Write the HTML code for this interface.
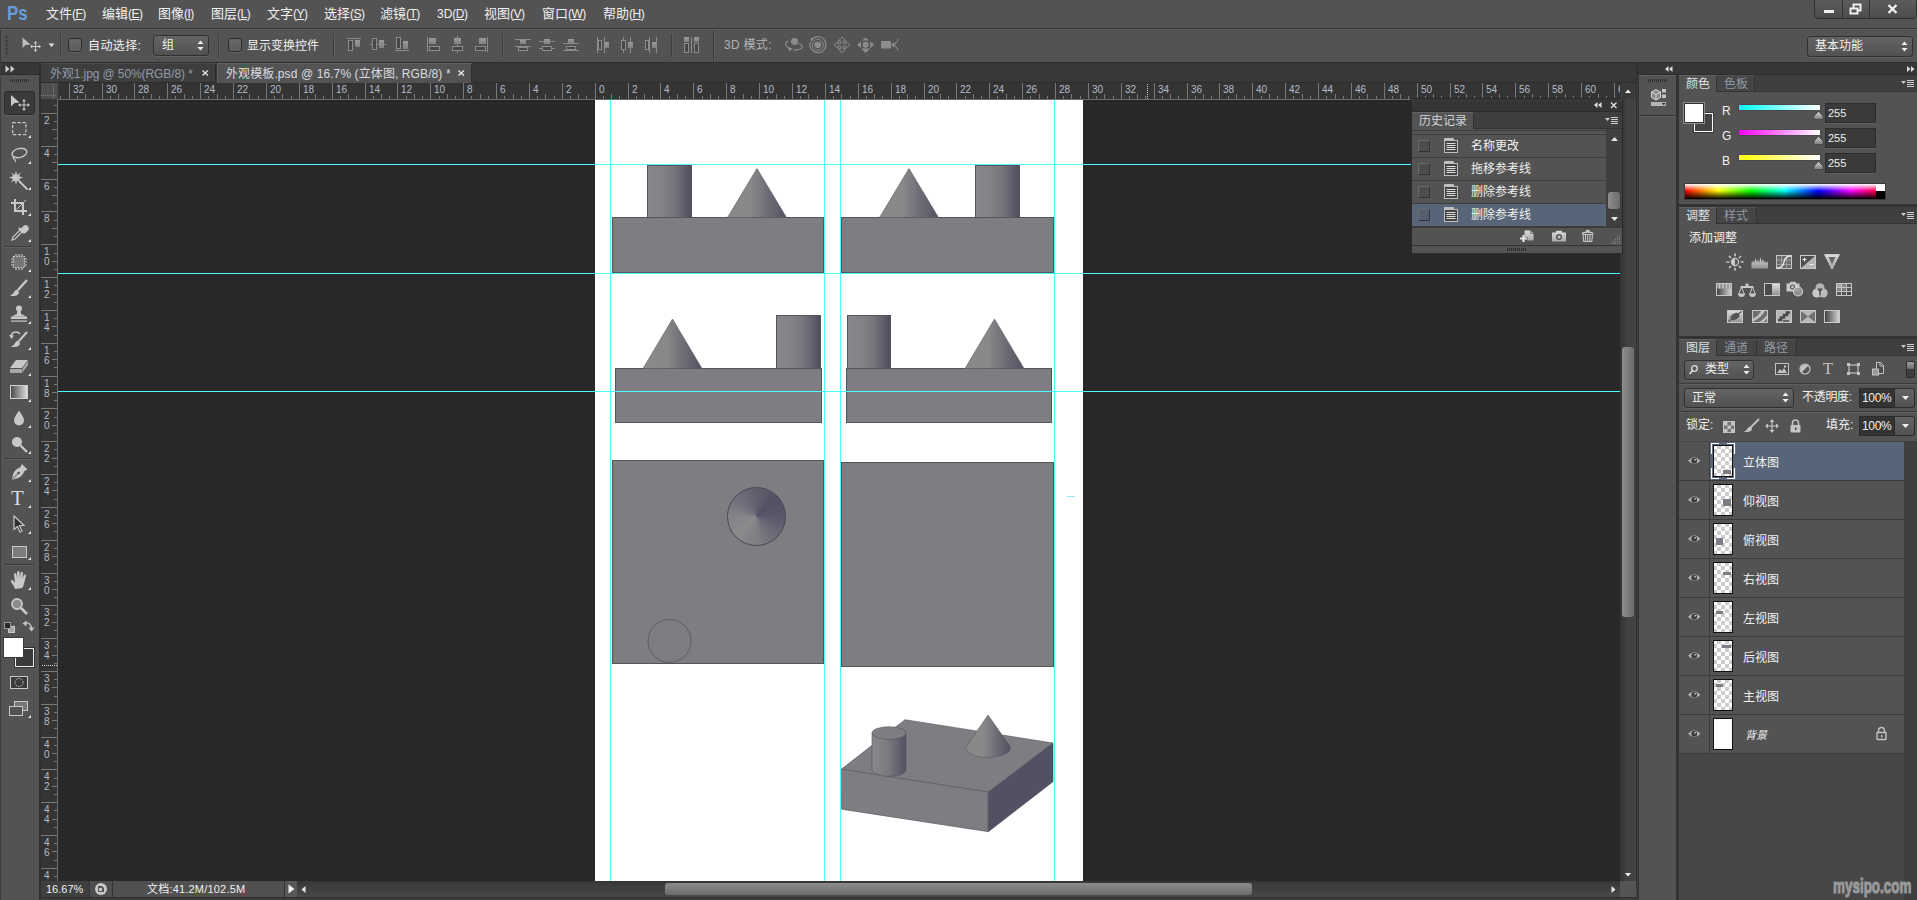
<!DOCTYPE html>
<html lang="zh"><head><meta charset="utf-8"><title>Photoshop</title>
<style>
html,body{margin:0;padding:0;}
body{width:1917px;height:900px;overflow:hidden;background:#535353;position:relative;font-family:"Liberation Sans","Noto Sans CJK SC",sans-serif;font-size:12px;color:#e6e6e6;}
div,svg{position:absolute;box-sizing:border-box;}
.t{white-space:nowrap;}
svg{overflow:visible;}
</style></head><body>
<div style="left:0px;top:0px;width:1917px;height:28px;background:#535353;"></div>
<div style="left:0px;top:28px;width:1917px;height:1px;background:#3a3a3a;"></div>
<div style="left:0px;top:29px;width:1917px;height:1px;background:#5c5c5c;"></div>
<div class="t" style="left:7px;top:1px;height:24px;line-height:24px;font-size:21px;color:#6a9edb;font-weight:bold;transform:scaleX(0.80);transform-origin:left;">Ps</div>
<div class="t" style="left:46px;top:5px;height:17px;line-height:17px;font-size:13px;color:#f0f0f0;"><span style="font-size:13px">文件</span><span style="font-size:12px;letter-spacing:-0.5px">(<u>F</u>)</span></div>
<div class="t" style="left:102px;top:5px;height:17px;line-height:17px;font-size:13px;color:#f0f0f0;"><span style="font-size:13px">编辑</span><span style="font-size:12px;letter-spacing:-0.5px">(<u>E</u>)</span></div>
<div class="t" style="left:158px;top:5px;height:17px;line-height:17px;font-size:13px;color:#f0f0f0;"><span style="font-size:13px">图像</span><span style="font-size:12px;letter-spacing:-0.5px">(<u>I</u>)</span></div>
<div class="t" style="left:211px;top:5px;height:17px;line-height:17px;font-size:13px;color:#f0f0f0;"><span style="font-size:13px">图层</span><span style="font-size:12px;letter-spacing:-0.5px">(<u>L</u>)</span></div>
<div class="t" style="left:267px;top:5px;height:17px;line-height:17px;font-size:13px;color:#f0f0f0;"><span style="font-size:13px">文字</span><span style="font-size:12px;letter-spacing:-0.5px">(<u>Y</u>)</span></div>
<div class="t" style="left:324px;top:5px;height:17px;line-height:17px;font-size:13px;color:#f0f0f0;"><span style="font-size:13px">选择</span><span style="font-size:12px;letter-spacing:-0.5px">(<u>S</u>)</span></div>
<div class="t" style="left:380px;top:5px;height:17px;line-height:17px;font-size:13px;color:#f0f0f0;"><span style="font-size:13px">滤镜</span><span style="font-size:12px;letter-spacing:-0.5px">(<u>T</u>)</span></div>
<div class="t" style="left:437px;top:5px;height:17px;line-height:17px;font-size:13px;color:#f0f0f0;"><span style="font-size:12px">3D</span><span style="font-size:12px;letter-spacing:-0.5px">(<u>D</u>)</span></div>
<div class="t" style="left:484px;top:5px;height:17px;line-height:17px;font-size:13px;color:#f0f0f0;"><span style="font-size:13px">视图</span><span style="font-size:12px;letter-spacing:-0.5px">(<u>V</u>)</span></div>
<div class="t" style="left:542px;top:5px;height:17px;line-height:17px;font-size:13px;color:#f0f0f0;"><span style="font-size:13px">窗口</span><span style="font-size:12px;letter-spacing:-0.5px">(<u>W</u>)</span></div>
<div class="t" style="left:603px;top:5px;height:17px;line-height:17px;font-size:13px;color:#f0f0f0;"><span style="font-size:13px">帮助</span><span style="font-size:12px;letter-spacing:-0.5px">(<u>H</u>)</span></div>
<div style="left:1814px;top:-4px;width:103px;height:23px;background:linear-gradient(#5e5e5e,#4c4c4c);border:1px solid #2e2e2e;border-radius:0 0 4px 4px;"></div>
<div style="left:1842px;top:0px;width:1px;height:18px;background:#333;"></div>
<div style="left:1869px;top:0px;width:1px;height:18px;background:#333;"></div>
<div style="left:1824px;top:10px;width:10px;height:3px;background:#f0f0f0;"></div>
<svg style="left:1849px;top:3px;" width="14" height="12" viewBox="0 0 14 12"><rect x="4.5" y="1.5" width="7" height="6" fill="none" stroke="#f0f0f0" stroke-width="2"/><rect x="1.5" y="5.5" width="7" height="5" fill="#555" stroke="#f0f0f0" stroke-width="2"/></svg>
<svg style="left:1887px;top:4px;" width="12" height="10" viewBox="0 0 12 10"><path d="M1.5 1 L9.5 9 M9.5 1 L1.5 9" stroke="#f0f0f0" stroke-width="2.4"/></svg>
<div style="left:0px;top:30px;width:1917px;height:32px;background:#535353;"></div>
<div style="left:0px;top:30px;width:1px;height:32px;background:#3a3a3a;"></div>
<div style="left:0px;top:62px;width:1917px;height:1px;background:#2e2e2e;"></div>
<div style="left:5px;top:36px;width:3px;height:1px;background:#3a3a3a;"></div>
<div style="left:5px;top:38px;width:3px;height:1px;background:#3a3a3a;"></div>
<div style="left:5px;top:40px;width:3px;height:1px;background:#3a3a3a;"></div>
<div style="left:5px;top:42px;width:3px;height:1px;background:#3a3a3a;"></div>
<div style="left:5px;top:44px;width:3px;height:1px;background:#3a3a3a;"></div>
<div style="left:5px;top:46px;width:3px;height:1px;background:#3a3a3a;"></div>
<div style="left:5px;top:48px;width:3px;height:1px;background:#3a3a3a;"></div>
<div style="left:5px;top:50px;width:3px;height:1px;background:#3a3a3a;"></div>
<div style="left:5px;top:52px;width:3px;height:1px;background:#3a3a3a;"></div>
<div style="left:5px;top:54px;width:3px;height:1px;background:#3a3a3a;"></div>
<svg style="left:22px;top:36px;" width="22" height="17" viewBox="0 0 22 17"><path d="M0.500 1.500 L0.500 12 L3.500 9 L8.500 8.500 Z" fill="#bcbcbc"/><path d="M13.500 6.500 v8 M9.500 10.500 h8" stroke="#c8c8c8" stroke-width="1" fill="none"/><path d="M13.500 5 l-2 2.300 h4z M13.500 16 l-2 -2.300 h4z M8 10.500 l2.300 -2 v4z M19 10.500 l-2.300 -2 v4z" fill="#c8c8c8"/></svg>
<svg style="left:48px;top:43px;" width="8" height="5" viewBox="0 0 8 5"><path d="M0.5 0.5 h6 l-3 3.5z" fill="#e0e0e0"/></svg>
<div style="left:60px;top:34px;width:1px;height:23px;background:#3e3e3e;"></div>
<div style="left:61px;top:34px;width:1px;height:23px;background:#5e5e5e;"></div>
<div style="left:68px;top:38px;width:14px;height:14px;background:linear-gradient(#686868,#5c5c5c);border:1px solid #2c2c2c;border-radius:3px;box-shadow:0 1px 0 #626262;"></div>
<div class="t" style="left:88px;top:38px;height:17px;line-height:17px;font-size:12px;color:#f0f0f0;letter-spacing:0.4px;">自动选择:</div>
<div style="left:153px;top:35px;width:56px;height:21px;background:linear-gradient(#646464,#515151);border:1px solid #303030;border-radius:3px;box-shadow:0 1px 0 #626262;"></div>
<div class="t" style="left:162px;top:36px;height:19px;line-height:19px;font-size:12px;color:#f0f0f0;">组</div>
<svg style="left:197px;top:40px;" width="7" height="11" viewBox="0 0 7 11"><path d="M0.5 4 h6 l-3 -3.5z M0.5 7 h6 l-3 3.5z" fill="#f0f0f0"/></svg>
<div style="left:218px;top:34px;width:1px;height:23px;background:#3e3e3e;"></div>
<div style="left:219px;top:34px;width:1px;height:23px;background:#5e5e5e;"></div>
<div style="left:228px;top:38px;width:14px;height:14px;background:linear-gradient(#686868,#5c5c5c);border:1px solid #2c2c2c;border-radius:3px;box-shadow:0 1px 0 #626262;"></div>
<div class="t" style="left:247px;top:38px;height:17px;line-height:17px;font-size:12px;color:#f0f0f0;">显示变换控件</div>
<div style="left:333px;top:34px;width:1px;height:23px;background:#3e3e3e;"></div>
<div style="left:334px;top:34px;width:1px;height:23px;background:#5e5e5e;"></div>
<svg style="left:0;top:0" width="920" height="62" viewBox="0 0 920 62"><defs><linearGradient id="og" x1="0" x2="0" y1="0" y2="1"><stop offset="0" stop-color="#9a9a9a"/><stop offset="1" stop-color="#808080"/></linearGradient></defs><rect x="347" y="38" width="14" height="1" fill="#8c8c8c"/><rect x="348.5" y="40.5" width="4" height="10" fill="#464646" stroke="#8c8c8c" stroke-width="1"/><rect x="355" y="40" width="5" height="7" fill="url(#og)"/><rect x="370" y="44" width="16" height="1" fill="#8c8c8c"/><rect x="372.5" y="38.5" width="4" height="11" fill="#464646" stroke="#8c8c8c" stroke-width="1"/><rect x="379" y="40" width="5" height="8" fill="url(#og)"/><rect x="395" y="50" width="14" height="1" fill="#8c8c8c"/><rect x="396.5" y="37.5" width="4" height="11" fill="#464646" stroke="#8c8c8c" stroke-width="1"/><rect x="403" y="41" width="5" height="8" fill="url(#og)"/><rect x="427" y="37" width="1" height="15" fill="#8c8c8c"/><rect x="429" y="38" width="7" height="6" fill="url(#og)"/><rect x="429.5" y="46.5" width="10" height="4" fill="#464646" stroke="#8c8c8c" stroke-width="1"/><rect x="457" y="36" width="1" height="17" fill="#8c8c8c"/><rect x="454" y="38" width="7" height="6" fill="url(#og)"/><rect x="452.5" y="46.5" width="10" height="4" fill="#464646" stroke="#8c8c8c" stroke-width="1"/><rect x="487" y="37" width="1" height="15" fill="#8c8c8c"/><rect x="479" y="38" width="7" height="6" fill="url(#og)"/><rect x="475.5" y="46.5" width="10" height="4" fill="#464646" stroke="#8c8c8c" stroke-width="1"/><rect x="515" y="39" width="16" height="1" fill="#8c8c8c"/><rect x="515" y="46" width="16" height="1" fill="#8c8c8c"/><rect x="520" y="40" width="6" height="4" fill="url(#og)"/><rect x="518.5" y="47.5" width="9" height="3" fill="#464646" stroke="#8c8c8c" stroke-width="1"/><rect x="539" y="41" width="16" height="1" fill="#8c8c8c"/><rect x="539" y="48" width="16" height="1" fill="#8c8c8c"/><rect x="544" y="39" width="6" height="5" fill="url(#og)"/><rect x="542.5" y="46.5" width="9" height="4" fill="#464646" stroke="#8c8c8c" stroke-width="1"/><rect x="563" y="43" width="16" height="1" fill="#8c8c8c"/><rect x="563" y="50" width="16" height="1" fill="#8c8c8c"/><rect x="568" y="39" width="6" height="4" fill="url(#og)"/><rect x="566.5" y="46.5" width="9" height="3" fill="#464646" stroke="#8c8c8c" stroke-width="1"/><rect x="597" y="37" width="1" height="16" fill="#8c8c8c"/><rect x="604" y="37" width="1" height="16" fill="#8c8c8c"/><rect x="598.5" y="40.5" width="3" height="9" fill="#464646" stroke="#8c8c8c" stroke-width="1"/><rect x="605" y="42" width="4" height="6" fill="url(#og)"/><rect x="623" y="37" width="1" height="16" fill="#8c8c8c"/><rect x="630" y="37" width="1" height="16" fill="#8c8c8c"/><rect x="621.5" y="40.5" width="4" height="9" fill="#464646" stroke="#8c8c8c" stroke-width="1"/><rect x="628" y="42" width="5" height="6" fill="url(#og)"/><rect x="649" y="37" width="1" height="16" fill="#8c8c8c"/><rect x="656" y="37" width="1" height="16" fill="#8c8c8c"/><rect x="645.5" y="40.5" width="3" height="9" fill="#464646" stroke="#8c8c8c" stroke-width="1"/><rect x="652" y="42" width="4" height="6" fill="url(#og)"/><rect x="684" y="37" width="5" height="5" fill="url(#og)"/><rect x="684.5" y="43.5" width="4" height="9" fill="#464646" stroke="#8c8c8c" stroke-width="1"/><rect x="691" y="37" width="1" height="16" fill="#8c8c8c"/><rect x="694" y="37" width="5" height="5" fill="url(#og)"/><rect x="694.5" y="43.5" width="4" height="9" fill="#464646" stroke="#8c8c8c" stroke-width="1"/><circle cx="794.5" cy="41.5" r="3.6" fill="#8c8c8c"/><path d="M788.5 41 q-4 1.500 -2.500 4.500 q1.500 2.500 5 3.500 M798.500 43.500 q4.500 1.500 3.500 4 q-1.500 2.500 -8 2.500" fill="none" stroke="#8c8c8c" stroke-width="1.300"/><path d="M787.500 47.500 l5.500 0.500 l-3.500 3.500z" fill="#8c8c8c"/><circle cx="817.8" cy="44.8" r="3.400" fill="#8c8c8c"/><circle cx="817.8" cy="44.800" r="5.500" fill="none" stroke="#8c8c8c" stroke-width="1"/><path d="M812.500 38.700 A8 8 0 1 1 810.200 42.500" fill="none" stroke="#8c8c8c" stroke-width="1.200"/><path d="M810.500 38 l4 0 l-3.500 3.800z" fill="#8c8c8c"/><path d="M842 37 l3.500 4 h-2.300 v2.700 h2.700 v-2.300 l4 3.500 l-4 3.500 v-2.300 h-2.700 v2.700 h2.300 l-3.500 4 l-3.500 -4 h2.300 v-2.700 h-2.700 v2.300 l-4 -3.500 l4 -3.500 v2.300 h2.700 v-2.700 h-2.300z" fill="none" stroke="#8c8c8c" stroke-width="1"/><circle cx="865.600" cy="44.800" r="3" fill="#8c8c8c"/><path d="M865.600 37.500 l3.500 3 h-7z M865.600 53 l4.500 -4.500 h-9z M857 44.800 l4 -3.500 v7z M874.200 44.800 l-4 -3.500 v7z" fill="#8c8c8c"/><rect x="881" y="41" width="10" height="7.500" rx="1" fill="#8c8c8c"/><path d="M891 44.800 l3.500 -3 v6z" fill="#8c8c8c"/><path d="M898.500 39 l-3.800 5.800 l3.800 5.800" fill="none" stroke="#8c8c8c" stroke-width="1"/></svg>
<div style="left:502px;top:34px;width:1px;height:23px;background:#3e3e3e;"></div>
<div style="left:503px;top:34px;width:1px;height:23px;background:#5e5e5e;"></div>
<div style="left:671px;top:34px;width:1px;height:23px;background:#3e3e3e;"></div>
<div style="left:672px;top:34px;width:1px;height:23px;background:#5e5e5e;"></div>
<div style="left:713px;top:30px;width:1px;height:32px;background:#3a3a3a;"></div>
<div style="left:714px;top:30px;width:1px;height:32px;background:#5e5e5e;"></div>
<div class="t" style="left:724px;top:37px;height:17px;line-height:17px;font-size:12px;color:#b4b4b4;letter-spacing:0.300px;">3D 模式:</div>
<div style="left:1807px;top:36px;width:106px;height:21px;background:linear-gradient(#646464,#515151);border:1px solid #303030;border-radius:3px;box-shadow:0 1px 0 #626262;"></div>
<div class="t" style="left:1815px;top:37px;height:19px;line-height:19px;font-size:12px;color:#f0f0f0;">基本功能</div>
<svg style="left:1901px;top:41px;" width="7" height="11" viewBox="0 0 7 11"><path d="M0.5 4 h6 l-3 -3.5z M0.5 7 h6 l-3 3.5z" fill="#f0f0f0"/></svg>
<div style="left:0px;top:63px;width:39px;height:11px;background:#373737;"></div>
<div style="left:0px;top:74px;width:39px;height:1px;background:#2c2c2c;"></div>
<div style="left:0px;top:75px;width:39px;height:825px;background:#535353;"></div>
<div style="left:39px;top:63px;width:2px;height:837px;background:#303030;"></div>
<div style="left:0px;top:63px;width:1px;height:837px;background:#3e3e3e;"></div>
<svg style="left:5px;top:65px;" width="12" height="8" viewBox="0 0 12 8"><path d="M0.5 0.5 l4 3.500 l-4 3.500z M5.500 0.500 l4 3.500 l-4 3.500z" fill="#d0d0d0"/></svg>
<div style="left:10px;top:79px;width:1px;height:3px;background:#303030;"></div>
<div style="left:12px;top:79px;width:1px;height:3px;background:#303030;"></div>
<div style="left:14px;top:79px;width:1px;height:3px;background:#303030;"></div>
<div style="left:16px;top:79px;width:1px;height:3px;background:#303030;"></div>
<div style="left:18px;top:79px;width:1px;height:3px;background:#303030;"></div>
<div style="left:20px;top:79px;width:1px;height:3px;background:#303030;"></div>
<div style="left:22px;top:79px;width:1px;height:3px;background:#303030;"></div>
<div style="left:24px;top:79px;width:1px;height:3px;background:#303030;"></div>
<div style="left:26px;top:79px;width:1px;height:3px;background:#303030;"></div>
<div style="left:28px;top:79px;width:1px;height:3px;background:#303030;"></div>
<div style="left:4px;top:91px;width:31px;height:24px;background:#3a3a3a;border:1px solid #2c2c2c;border-radius:3px;box-shadow:0 1px 0 #606060;"></div>
<svg style="left:9px;top:94px;" width="22" height="17" viewBox="0 0 22 17"><path d="M2 1 L2 12.500 L5.500 9 L10.500 8.500 Z" fill="#c8c8c8"/><path d="M15 6.500 v9 M10.500 11 h9" stroke="#c8c8c8" stroke-width="1" fill="none"/><path d="M15 5 l-2 2.300 h4z M15 17 l-2 -2.300 h4z M9 11 l2.300 -2 v4z M21 11 l-2.300 -2 v4z" fill="#c8c8c8"/></svg>
<svg style="left:12px;top:122px;" width="15" height="14" viewBox="0 0 15 14"><rect x="0.600" y="0.600" width="13.300" height="12" fill="none" stroke="#c8c8c8" stroke-width="1.200" stroke-dasharray="3.200 1.800"/></svg>
<svg style="left:28px;top:135px;" width="3" height="3" viewBox="0 0 3 3"><path d="M3 0 v3 h-3z" fill="#e8e8e8"/></svg>
<svg style="left:10px;top:147px;" width="18" height="16" viewBox="0 0 18 16"><ellipse cx="9.500" cy="6" rx="7.500" ry="4.500" fill="none" stroke="#c8c8c8" stroke-width="1.400" transform="rotate(-12 9.500 6)"/><path d="M4 9 q-2 2 0 3 q2 1 1 3" fill="none" stroke="#c8c8c8" stroke-width="1.200"/></svg>
<svg style="left:28px;top:161px;" width="3" height="3" viewBox="0 0 3 3"><path d="M3 0 v3 h-3z" fill="#e8e8e8"/></svg>
<svg style="left:9px;top:171px;" width="20" height="20" viewBox="0 0 20 20"><path d="M10 10 L18.500 18.500" stroke="#c8c8c8" stroke-width="1.800"/><path d="M7 0 L8.300 4 L11.500 1.500 L10 5.300 L14 6.500 L10 8 L12 11.500 L8.300 9.500 L7 13.500 L5.700 9.500 L2 11.500 L4 8 L0 6.500 L4 5.300 L2.500 1.500 L5.700 4 Z" fill="#c8c8c8"/></svg>
<svg style="left:28px;top:187px;" width="3" height="3" viewBox="0 0 3 3"><path d="M3 0 v3 h-3z" fill="#e8e8e8"/></svg>
<svg style="left:11px;top:199px;" width="16" height="16" viewBox="0 0 16 16"><path d="M4 0 v12 h12 M0 4 h12 v12" fill="none" stroke="#c8c8c8" stroke-width="2"/><path d="M5.500 10.500 L15 1" stroke="#c8c8c8" stroke-width="1"/></svg>
<svg style="left:28px;top:213px;" width="3" height="3" viewBox="0 0 3 3"><path d="M3 0 v3 h-3z" fill="#e8e8e8"/></svg>
<svg style="left:10px;top:224px;" width="18" height="18" viewBox="0 0 18 18"><path d="M2 16 L3 13 L10 6 L12 8 L5 15 Z" fill="none" stroke="#c8c8c8" stroke-width="1.200"/><path d="M9 4 L14 9 M11 6 L14 3 a2 2 0 0 1 3 3 L14 9" stroke="#c8c8c8" stroke-width="2.200" fill="#c8c8c8"/></svg>
<svg style="left:28px;top:239px;" width="3" height="3" viewBox="0 0 3 3"><path d="M3 0 v3 h-3z" fill="#e8e8e8"/></svg>
<div style="left:4px;top:246px;width:30px;height:1px;background:#3e3e3e;"></div>
<div style="left:4px;top:247px;width:30px;height:1px;background:#5e5e5e;"></div>
<svg style="left:11px;top:254px;" width="16" height="16" viewBox="0 0 16 16"><rect x="2.500" y="2.500" width="11" height="11" fill="#777" stroke="#c8c8c8" stroke-width="1.200" stroke-dasharray="1.500 1"/><path d="M5 0 v2 M8 0 v2 M11 0 v2 M5 14 v2 M8 14 v2 M11 14 v2 M0 5 h2 M0 8 h2 M0 11 h2 M14 5 h2 M14 8 h2 M14 11 h2" stroke="#c8c8c8" stroke-width="1.200"/></svg>
<svg style="left:28px;top:269px;" width="3" height="3" viewBox="0 0 3 3"><path d="M3 0 v3 h-3z" fill="#e8e8e8"/></svg>
<svg style="left:9px;top:279px;" width="20" height="18" viewBox="0 0 20 18"><path d="M18 1 L9 11" stroke="#c8c8c8" stroke-width="2.400"/><path d="M8.500 10.500 q-2.500 0 -3.500 2.500 q-1 3 -4 3.500 q5 1.500 8 -1 q2 -2 -0.500 -5z" fill="#c8c8c8"/></svg>
<svg style="left:28px;top:295px;" width="3" height="3" viewBox="0 0 3 3"><path d="M3 0 v3 h-3z" fill="#e8e8e8"/></svg>
<svg style="left:10px;top:305px;" width="18" height="18" viewBox="0 0 18 18"><circle cx="9" cy="3.500" r="3" fill="#c8c8c8"/><path d="M7.500 5 h3 l0.500 4 q3 0.500 4.500 2.500 h-13 q1.500 -2 4.500 -2.500z" fill="#c8c8c8"/><rect x="1" y="11.500" width="16" height="2.500" fill="#c8c8c8"/><rect x="1" y="15.500" width="16" height="1.200" fill="#c8c8c8"/></svg>
<svg style="left:28px;top:321px;" width="3" height="3" viewBox="0 0 3 3"><path d="M3 0 v3 h-3z" fill="#e8e8e8"/></svg>
<svg style="left:9px;top:331px;" width="20" height="18" viewBox="0 0 20 18"><path d="M18 1 L10 10" stroke="#c8c8c8" stroke-width="2.200"/><path d="M9.500 9.500 q-2.500 0 -3.500 2.500 q-1 3 -4 3.500 q5 1.500 8 -1 q2 -2 -0.500 -5z" fill="#c8c8c8"/><path d="M2 6 a5 5 0 0 1 9 -3" fill="none" stroke="#c8c8c8" stroke-width="1.500"/><path d="M0 4 l2.500 4 l2.500 -3.500z" fill="#c8c8c8"/></svg>
<svg style="left:28px;top:347px;" width="3" height="3" viewBox="0 0 3 3"><path d="M3 0 v3 h-3z" fill="#e8e8e8"/></svg>
<svg style="left:10px;top:359px;" width="19" height="15" viewBox="0 0 19 15"><path d="M6 1 h12 l-6 8 h-12z" fill="#c8c8c8"/><path d="M0 10 h12 v4 h-12z M12.500 9.500 l5.500 -7.500 v4 l-5.500 7.500z" fill="#a8a8a8"/></svg>
<svg style="left:28px;top:373px;" width="3" height="3" viewBox="0 0 3 3"><path d="M3 0 v3 h-3z" fill="#e8e8e8"/></svg>
<svg style="left:10px;top:385px;" width="18" height="14" viewBox="0 0 18 14"><defs><linearGradient id="tg"><stop offset="0" stop-color="#4a4a4a"/><stop offset="1" stop-color="#e0e0e0"/></linearGradient></defs><rect x="0.500" y="0.500" width="17" height="13" fill="url(#tg)" stroke="#d0d0d0" stroke-width="1"/></svg>
<svg style="left:28px;top:399px;" width="3" height="3" viewBox="0 0 3 3"><path d="M3 0 v3 h-3z" fill="#e8e8e8"/></svg>
<svg style="left:13px;top:410px;" width="12" height="16" viewBox="0 0 12 16"><path d="M6 0.500 q5 7 5 10 a5 5 0 0 1 -10 0 q0 -3 5 -10z" fill="#c8c8c8"/></svg>
<svg style="left:28px;top:425px;" width="3" height="3" viewBox="0 0 3 3"><path d="M3 0 v3 h-3z" fill="#e8e8e8"/></svg>
<svg style="left:10px;top:436px;" width="18" height="17" viewBox="0 0 18 17"><circle cx="7" cy="6" r="5" fill="#c8c8c8"/><path d="M10.500 9.500 L17 16" stroke="#c8c8c8" stroke-width="2.400"/></svg>
<svg style="left:28px;top:451px;" width="3" height="3" viewBox="0 0 3 3"><path d="M3 0 v3 h-3z" fill="#e8e8e8"/></svg>
<div style="left:4px;top:458px;width:30px;height:1px;background:#3e3e3e;"></div>
<div style="left:4px;top:459px;width:30px;height:1px;background:#5e5e5e;"></div>
<svg style="left:10px;top:463px;" width="19" height="18" viewBox="0 0 19 18"><path d="M12 1 l5.500 5.500 l-3 1.500 q-2 5 -6 7 l-7 2 l2 -7 q2 -4 7 -6z" fill="#c8c8c8"/><circle cx="8.500" cy="10" r="1.300" fill="#535353"/><path d="M1.500 17 L8 10.500" stroke="#535353" stroke-width="1"/></svg>
<svg style="left:28px;top:479px;" width="3" height="3" viewBox="0 0 3 3"><path d="M3 0 v3 h-3z" fill="#e8e8e8"/></svg>
<div class="t" style="left:11px;top:486px;height:24px;line-height:24px;font-size:21px;color:#dcdcdc;font-family:'Liberation Serif',serif;">T</div>
<svg style="left:28px;top:505px;" width="3" height="3" viewBox="0 0 3 3"><path d="M3 0 v3 h-3z" fill="#e8e8e8"/></svg>
<svg style="left:13px;top:515px;" width="12" height="18" viewBox="0 0 12 18"><path d="M1 1 L1 14.500 L4.500 11.500 L7 17 L9 16 L6.500 10.500 L11 10.500 Z" fill="#2e2e2e" stroke="#c8c8c8" stroke-width="1.200"/></svg>
<svg style="left:28px;top:531px;" width="3" height="3" viewBox="0 0 3 3"><path d="M3 0 v3 h-3z" fill="#e8e8e8"/></svg>
<svg style="left:12px;top:546px;" width="15" height="12" viewBox="0 0 15 12"><rect x="0.500" y="0.500" width="14" height="11" fill="#7c7c7c" stroke="#c8c8c8" stroke-width="1"/></svg>
<svg style="left:28px;top:557px;" width="3" height="3" viewBox="0 0 3 3"><path d="M3 0 v3 h-3z" fill="#e8e8e8"/></svg>
<div style="left:4px;top:564px;width:30px;height:1px;background:#3e3e3e;"></div>
<div style="left:4px;top:565px;width:30px;height:1px;background:#5e5e5e;"></div>
<svg style="left:10px;top:571px;" width="19" height="19" viewBox="0 0 19 19"><path d="M5 18 q-1 -3 -4 -7 q-1 -2 1 -2 q1 0 3 2.500 l-1 -8 q0 -1.500 1.200 -1.500 q1 0 1.300 1.500 l0.800 4.500 l-0.300 -6.500 q0 -1.500 1.300 -1.500 q1.200 0 1.300 1.500 l0.400 6 l0.600 -5.500 q0.200 -1.400 1.300 -1.300 q1.200 0.200 1.100 1.600 l-0.400 6 l1.200 -3.800 q0.400 -1.200 1.400 -0.900 q1 0.400 0.700 1.700 l-1.500 6 q-0.500 3 -2 5.700z" fill="#c8c8c8"/></svg>
<svg style="left:28px;top:587px;" width="3" height="3" viewBox="0 0 3 3"><path d="M3 0 v3 h-3z" fill="#e8e8e8"/></svg>
<svg style="left:10px;top:597px;" width="18" height="18" viewBox="0 0 18 18"><circle cx="7" cy="7" r="5" fill="#8a8a8a" stroke="#c8c8c8" stroke-width="1.800"/><path d="M11 11 L17 17" stroke="#c8c8c8" stroke-width="2.600"/></svg>
<svg style="left:4px;top:622px;" width="11" height="11" viewBox="0 0 11 11"><rect x="4.500" y="4.500" width="6" height="6" fill="#a8a8a8" stroke="#c8c8c8"/><rect x="0.500" y="0.500" width="6" height="6" fill="#2a2a2a" stroke="#9a9a9a"/></svg>
<svg style="left:22px;top:620px;" width="12" height="12" viewBox="0 0 12 12"><path d="M3 3 q6 -1 6.500 6" fill="none" stroke="#c8c8c8" stroke-width="1.300"/><path d="M0.500 3.500 l4 -3 v6z M9.500 11.500 l-3 -4 h6z" fill="#c8c8c8"/></svg>
<div style="left:15px;top:648px;width:19px;height:19px;background:#3a3a3a;border:1px solid #ececec;box-shadow:0 0 0 1px #303030;"></div>
<div style="left:4px;top:638px;width:19px;height:19px;background:#ffffff;box-shadow:0 0 0 1px #3a3a3a;"></div>
<svg style="left:10px;top:676px;" width="18" height="13" viewBox="0 0 18 13"><rect x="0.500" y="0.500" width="17" height="12" fill="#3a3a3a" stroke="#c8c8c8" stroke-width="1"/><circle cx="9" cy="6.500" r="4" fill="none" stroke="#e8e8e8" stroke-width="1" stroke-dasharray="1 1.100"/></svg>
<svg style="left:9px;top:701px;" width="20" height="16" viewBox="0 0 20 16"><rect x="5.500" y="0.500" width="13" height="9" fill="#777" stroke="#c8c8c8"/><rect x="0.500" y="5.500" width="13" height="9" fill="#535353" stroke="#c8c8c8"/></svg>
<svg style="left:28px;top:715px;" width="3" height="3" viewBox="0 0 3 3"><path d="M3 0 v3 h-3z" fill="#e8e8e8"/></svg>
<div style="left:41px;top:63px;width:1596px;height:20px;background:#383838;"></div>
<div style="left:41px;top:82px;width:1596px;height:1px;background:#2c2c2c;"></div>
<div style="left:41px;top:63px;width:175px;height:19px;background:#3e3e3e;border-right:1px solid #2c2c2c;border-top:1px solid #4a4a4a;"></div>
<div class="t" style="left:50px;top:66px;height:17px;line-height:17px;font-size:12px;color:#8f9aa8;letter-spacing:-0.1px;">外观1.jpg @ 50%(RGB/8) *</div>
<svg style="left:202px;top:70px;" width="7" height="6" viewBox="0 0 7 6"><path d="M0.500 0.500 l5.500 5 M6 0.500 l-5.500 5" stroke="#e0e0e0" stroke-width="1.400"/></svg>
<div style="left:217px;top:63px;width:255px;height:20px;background:#535353;border-right:1px solid #2e2e2e;border-left:1px solid #5e5e5e;border-top:1px solid #626262;"></div>
<div class="t" style="left:226px;top:66px;height:17px;line-height:17px;font-size:12px;color:#d8dce2;letter-spacing:0.1px;">外观模板.psd @ 16.7% (立体图, RGB/8) *</div>
<svg style="left:458px;top:70px;" width="7" height="6" viewBox="0 0 7 6"><path d="M0.500 0.500 l5.500 5 M6 0.500 l-5.500 5" stroke="#e8e8e8" stroke-width="1.400"/></svg>
<div style="left:41px;top:83px;width:1579px;height:17px;background:#343434;"></div>
<div style="left:41px;top:100px;width:17px;height:781px;background:#343434;"></div>
<div style="left:41px;top:83px;width:17px;height:16px;background:#4e4e4e;"></div>
<div style="left:58px;top:99px;width:1562px;height:1px;background:#6c6c6c;"></div>
<div style="left:57px;top:99px;width:1px;height:782px;background:#6c6c6c;"></div>
<div style="left:41px;top:95px;width:16px;height:1px;background:repeating-linear-gradient(90deg,#7c7c7c 0 1px,transparent 1px 2px);"></div>
<div style="left:53px;top:83px;width:1px;height:16px;background:repeating-linear-gradient(0deg,#7c7c7c 0 1px,transparent 1px 2px);"></div>
<div style="left:60px;top:96px;width:1px;height:3px;background:#787878"></div><div style="left:69px;top:83px;width:1px;height:16px;background:#787878"></div><div class="t" style="left:73px;top:84px;height:12px;line-height:12px;font-size:10px;color:#b4bcc8">32</div><div style="left:77px;top:96px;width:1px;height:3px;background:#787878"></div><div style="left:85px;top:94px;width:1px;height:5px;background:#787878"></div><div style="left:93px;top:96px;width:1px;height:3px;background:#787878"></div><div style="left:102px;top:83px;width:1px;height:16px;background:#787878"></div><div class="t" style="left:106px;top:84px;height:12px;line-height:12px;font-size:10px;color:#b4bcc8">30</div><div style="left:110px;top:96px;width:1px;height:3px;background:#787878"></div><div style="left:118px;top:94px;width:1px;height:5px;background:#787878"></div><div style="left:126px;top:96px;width:1px;height:3px;background:#787878"></div><div style="left:134px;top:83px;width:1px;height:16px;background:#787878"></div><div class="t" style="left:138px;top:84px;height:12px;line-height:12px;font-size:10px;color:#b4bcc8">28</div><div style="left:143px;top:96px;width:1px;height:3px;background:#787878"></div><div style="left:151px;top:94px;width:1px;height:5px;background:#787878"></div><div style="left:159px;top:96px;width:1px;height:3px;background:#787878"></div><div style="left:167px;top:83px;width:1px;height:16px;background:#787878"></div><div class="t" style="left:171px;top:84px;height:12px;line-height:12px;font-size:10px;color:#b4bcc8">26</div><div style="left:175px;top:96px;width:1px;height:3px;background:#787878"></div><div style="left:184px;top:94px;width:1px;height:5px;background:#787878"></div><div style="left:192px;top:96px;width:1px;height:3px;background:#787878"></div><div style="left:200px;top:83px;width:1px;height:16px;background:#787878"></div><div class="t" style="left:204px;top:84px;height:12px;line-height:12px;font-size:10px;color:#b4bcc8">24</div><div style="left:208px;top:96px;width:1px;height:3px;background:#787878"></div><div style="left:217px;top:94px;width:1px;height:5px;background:#787878"></div><div style="left:225px;top:96px;width:1px;height:3px;background:#787878"></div><div style="left:233px;top:83px;width:1px;height:16px;background:#787878"></div><div class="t" style="left:237px;top:84px;height:12px;line-height:12px;font-size:10px;color:#b4bcc8">22</div><div style="left:241px;top:96px;width:1px;height:3px;background:#787878"></div><div style="left:249px;top:94px;width:1px;height:5px;background:#787878"></div><div style="left:258px;top:96px;width:1px;height:3px;background:#787878"></div><div style="left:266px;top:83px;width:1px;height:16px;background:#787878"></div><div class="t" style="left:270px;top:84px;height:12px;line-height:12px;font-size:10px;color:#b4bcc8">20</div><div style="left:274px;top:96px;width:1px;height:3px;background:#787878"></div><div style="left:282px;top:94px;width:1px;height:5px;background:#787878"></div><div style="left:291px;top:96px;width:1px;height:3px;background:#787878"></div><div style="left:299px;top:83px;width:1px;height:16px;background:#787878"></div><div class="t" style="left:303px;top:84px;height:12px;line-height:12px;font-size:10px;color:#b4bcc8">18</div><div style="left:307px;top:96px;width:1px;height:3px;background:#787878"></div><div style="left:315px;top:94px;width:1px;height:5px;background:#787878"></div><div style="left:323px;top:96px;width:1px;height:3px;background:#787878"></div><div style="left:332px;top:83px;width:1px;height:16px;background:#787878"></div><div class="t" style="left:336px;top:84px;height:12px;line-height:12px;font-size:10px;color:#b4bcc8">16</div><div style="left:340px;top:96px;width:1px;height:3px;background:#787878"></div><div style="left:348px;top:94px;width:1px;height:5px;background:#787878"></div><div style="left:356px;top:96px;width:1px;height:3px;background:#787878"></div><div style="left:365px;top:83px;width:1px;height:16px;background:#787878"></div><div class="t" style="left:369px;top:84px;height:12px;line-height:12px;font-size:10px;color:#b4bcc8">14</div><div style="left:373px;top:96px;width:1px;height:3px;background:#787878"></div><div style="left:381px;top:94px;width:1px;height:5px;background:#787878"></div><div style="left:389px;top:96px;width:1px;height:3px;background:#787878"></div><div style="left:397px;top:83px;width:1px;height:16px;background:#787878"></div><div class="t" style="left:401px;top:84px;height:12px;line-height:12px;font-size:10px;color:#b4bcc8">12</div><div style="left:406px;top:96px;width:1px;height:3px;background:#787878"></div><div style="left:414px;top:94px;width:1px;height:5px;background:#787878"></div><div style="left:422px;top:96px;width:1px;height:3px;background:#787878"></div><div style="left:430px;top:83px;width:1px;height:16px;background:#787878"></div><div class="t" style="left:434px;top:84px;height:12px;line-height:12px;font-size:10px;color:#b4bcc8">10</div><div style="left:439px;top:96px;width:1px;height:3px;background:#787878"></div><div style="left:447px;top:94px;width:1px;height:5px;background:#787878"></div><div style="left:455px;top:96px;width:1px;height:3px;background:#787878"></div><div style="left:463px;top:83px;width:1px;height:16px;background:#787878"></div><div class="t" style="left:467px;top:84px;height:12px;line-height:12px;font-size:10px;color:#b4bcc8">8</div><div style="left:471px;top:96px;width:1px;height:3px;background:#787878"></div><div style="left:480px;top:94px;width:1px;height:5px;background:#787878"></div><div style="left:488px;top:96px;width:1px;height:3px;background:#787878"></div><div style="left:496px;top:83px;width:1px;height:16px;background:#787878"></div><div class="t" style="left:500px;top:84px;height:12px;line-height:12px;font-size:10px;color:#b4bcc8">6</div><div style="left:504px;top:96px;width:1px;height:3px;background:#787878"></div><div style="left:513px;top:94px;width:1px;height:5px;background:#787878"></div><div style="left:521px;top:96px;width:1px;height:3px;background:#787878"></div><div style="left:529px;top:83px;width:1px;height:16px;background:#787878"></div><div class="t" style="left:533px;top:84px;height:12px;line-height:12px;font-size:10px;color:#b4bcc8">4</div><div style="left:537px;top:96px;width:1px;height:3px;background:#787878"></div><div style="left:545px;top:94px;width:1px;height:5px;background:#787878"></div><div style="left:554px;top:96px;width:1px;height:3px;background:#787878"></div><div style="left:562px;top:83px;width:1px;height:16px;background:#787878"></div><div class="t" style="left:566px;top:84px;height:12px;line-height:12px;font-size:10px;color:#b4bcc8">2</div><div style="left:570px;top:96px;width:1px;height:3px;background:#787878"></div><div style="left:578px;top:94px;width:1px;height:5px;background:#787878"></div><div style="left:586px;top:96px;width:1px;height:3px;background:#787878"></div><div style="left:595px;top:83px;width:1px;height:16px;background:#787878"></div><div class="t" style="left:599px;top:84px;height:12px;line-height:12px;font-size:10px;color:#b4bcc8">0</div><div style="left:603px;top:96px;width:1px;height:3px;background:#787878"></div><div style="left:611px;top:94px;width:1px;height:5px;background:#787878"></div><div style="left:619px;top:96px;width:1px;height:3px;background:#787878"></div><div style="left:628px;top:83px;width:1px;height:16px;background:#787878"></div><div class="t" style="left:632px;top:84px;height:12px;line-height:12px;font-size:10px;color:#b4bcc8">2</div><div style="left:636px;top:96px;width:1px;height:3px;background:#787878"></div><div style="left:644px;top:94px;width:1px;height:5px;background:#787878"></div><div style="left:652px;top:96px;width:1px;height:3px;background:#787878"></div><div style="left:660px;top:83px;width:1px;height:16px;background:#787878"></div><div class="t" style="left:664px;top:84px;height:12px;line-height:12px;font-size:10px;color:#b4bcc8">4</div><div style="left:669px;top:96px;width:1px;height:3px;background:#787878"></div><div style="left:677px;top:94px;width:1px;height:5px;background:#787878"></div><div style="left:685px;top:96px;width:1px;height:3px;background:#787878"></div><div style="left:693px;top:83px;width:1px;height:16px;background:#787878"></div><div class="t" style="left:697px;top:84px;height:12px;line-height:12px;font-size:10px;color:#b4bcc8">6</div><div style="left:702px;top:96px;width:1px;height:3px;background:#787878"></div><div style="left:710px;top:94px;width:1px;height:5px;background:#787878"></div><div style="left:718px;top:96px;width:1px;height:3px;background:#787878"></div><div style="left:726px;top:83px;width:1px;height:16px;background:#787878"></div><div class="t" style="left:730px;top:84px;height:12px;line-height:12px;font-size:10px;color:#b4bcc8">8</div><div style="left:734px;top:96px;width:1px;height:3px;background:#787878"></div><div style="left:743px;top:94px;width:1px;height:5px;background:#787878"></div><div style="left:751px;top:96px;width:1px;height:3px;background:#787878"></div><div style="left:759px;top:83px;width:1px;height:16px;background:#787878"></div><div class="t" style="left:763px;top:84px;height:12px;line-height:12px;font-size:10px;color:#b4bcc8">10</div><div style="left:767px;top:96px;width:1px;height:3px;background:#787878"></div><div style="left:776px;top:94px;width:1px;height:5px;background:#787878"></div><div style="left:784px;top:96px;width:1px;height:3px;background:#787878"></div><div style="left:792px;top:83px;width:1px;height:16px;background:#787878"></div><div class="t" style="left:796px;top:84px;height:12px;line-height:12px;font-size:10px;color:#b4bcc8">12</div><div style="left:800px;top:96px;width:1px;height:3px;background:#787878"></div><div style="left:808px;top:94px;width:1px;height:5px;background:#787878"></div><div style="left:817px;top:96px;width:1px;height:3px;background:#787878"></div><div style="left:825px;top:83px;width:1px;height:16px;background:#787878"></div><div class="t" style="left:829px;top:84px;height:12px;line-height:12px;font-size:10px;color:#b4bcc8">14</div><div style="left:833px;top:96px;width:1px;height:3px;background:#787878"></div><div style="left:841px;top:94px;width:1px;height:5px;background:#787878"></div><div style="left:850px;top:96px;width:1px;height:3px;background:#787878"></div><div style="left:858px;top:83px;width:1px;height:16px;background:#787878"></div><div class="t" style="left:862px;top:84px;height:12px;line-height:12px;font-size:10px;color:#b4bcc8">16</div><div style="left:866px;top:96px;width:1px;height:3px;background:#787878"></div><div style="left:874px;top:94px;width:1px;height:5px;background:#787878"></div><div style="left:882px;top:96px;width:1px;height:3px;background:#787878"></div><div style="left:891px;top:83px;width:1px;height:16px;background:#787878"></div><div class="t" style="left:895px;top:84px;height:12px;line-height:12px;font-size:10px;color:#b4bcc8">18</div><div style="left:899px;top:96px;width:1px;height:3px;background:#787878"></div><div style="left:907px;top:94px;width:1px;height:5px;background:#787878"></div><div style="left:915px;top:96px;width:1px;height:3px;background:#787878"></div><div style="left:924px;top:83px;width:1px;height:16px;background:#787878"></div><div class="t" style="left:928px;top:84px;height:12px;line-height:12px;font-size:10px;color:#b4bcc8">20</div><div style="left:932px;top:96px;width:1px;height:3px;background:#787878"></div><div style="left:940px;top:94px;width:1px;height:5px;background:#787878"></div><div style="left:948px;top:96px;width:1px;height:3px;background:#787878"></div><div style="left:956px;top:83px;width:1px;height:16px;background:#787878"></div><div class="t" style="left:960px;top:84px;height:12px;line-height:12px;font-size:10px;color:#b4bcc8">22</div><div style="left:965px;top:96px;width:1px;height:3px;background:#787878"></div><div style="left:973px;top:94px;width:1px;height:5px;background:#787878"></div><div style="left:981px;top:96px;width:1px;height:3px;background:#787878"></div><div style="left:989px;top:83px;width:1px;height:16px;background:#787878"></div><div class="t" style="left:993px;top:84px;height:12px;line-height:12px;font-size:10px;color:#b4bcc8">24</div><div style="left:997px;top:96px;width:1px;height:3px;background:#787878"></div><div style="left:1006px;top:94px;width:1px;height:5px;background:#787878"></div><div style="left:1014px;top:96px;width:1px;height:3px;background:#787878"></div><div style="left:1022px;top:83px;width:1px;height:16px;background:#787878"></div><div class="t" style="left:1026px;top:84px;height:12px;line-height:12px;font-size:10px;color:#b4bcc8">26</div><div style="left:1030px;top:96px;width:1px;height:3px;background:#787878"></div><div style="left:1039px;top:94px;width:1px;height:5px;background:#787878"></div><div style="left:1047px;top:96px;width:1px;height:3px;background:#787878"></div><div style="left:1055px;top:83px;width:1px;height:16px;background:#787878"></div><div class="t" style="left:1059px;top:84px;height:12px;line-height:12px;font-size:10px;color:#b4bcc8">28</div><div style="left:1063px;top:96px;width:1px;height:3px;background:#787878"></div><div style="left:1071px;top:94px;width:1px;height:5px;background:#787878"></div><div style="left:1080px;top:96px;width:1px;height:3px;background:#787878"></div><div style="left:1088px;top:83px;width:1px;height:16px;background:#787878"></div><div class="t" style="left:1092px;top:84px;height:12px;line-height:12px;font-size:10px;color:#b4bcc8">30</div><div style="left:1096px;top:96px;width:1px;height:3px;background:#787878"></div><div style="left:1104px;top:94px;width:1px;height:5px;background:#787878"></div><div style="left:1113px;top:96px;width:1px;height:3px;background:#787878"></div><div style="left:1121px;top:83px;width:1px;height:16px;background:#787878"></div><div class="t" style="left:1125px;top:84px;height:12px;line-height:12px;font-size:10px;color:#b4bcc8">32</div><div style="left:1129px;top:96px;width:1px;height:3px;background:#787878"></div><div style="left:1137px;top:94px;width:1px;height:5px;background:#787878"></div><div style="left:1145px;top:96px;width:1px;height:3px;background:#787878"></div><div style="left:1154px;top:83px;width:1px;height:16px;background:#787878"></div><div class="t" style="left:1158px;top:84px;height:12px;line-height:12px;font-size:10px;color:#b4bcc8">34</div><div style="left:1162px;top:96px;width:1px;height:3px;background:#787878"></div><div style="left:1170px;top:94px;width:1px;height:5px;background:#787878"></div><div style="left:1178px;top:96px;width:1px;height:3px;background:#787878"></div><div style="left:1187px;top:83px;width:1px;height:16px;background:#787878"></div><div class="t" style="left:1191px;top:84px;height:12px;line-height:12px;font-size:10px;color:#b4bcc8">36</div><div style="left:1195px;top:96px;width:1px;height:3px;background:#787878"></div><div style="left:1203px;top:94px;width:1px;height:5px;background:#787878"></div><div style="left:1211px;top:96px;width:1px;height:3px;background:#787878"></div><div style="left:1219px;top:83px;width:1px;height:16px;background:#787878"></div><div class="t" style="left:1223px;top:84px;height:12px;line-height:12px;font-size:10px;color:#b4bcc8">38</div><div style="left:1228px;top:96px;width:1px;height:3px;background:#787878"></div><div style="left:1236px;top:94px;width:1px;height:5px;background:#787878"></div><div style="left:1244px;top:96px;width:1px;height:3px;background:#787878"></div><div style="left:1252px;top:83px;width:1px;height:16px;background:#787878"></div><div class="t" style="left:1256px;top:84px;height:12px;line-height:12px;font-size:10px;color:#b4bcc8">40</div><div style="left:1261px;top:96px;width:1px;height:3px;background:#787878"></div><div style="left:1269px;top:94px;width:1px;height:5px;background:#787878"></div><div style="left:1277px;top:96px;width:1px;height:3px;background:#787878"></div><div style="left:1285px;top:83px;width:1px;height:16px;background:#787878"></div><div class="t" style="left:1289px;top:84px;height:12px;line-height:12px;font-size:10px;color:#b4bcc8">42</div><div style="left:1293px;top:96px;width:1px;height:3px;background:#787878"></div><div style="left:1302px;top:94px;width:1px;height:5px;background:#787878"></div><div style="left:1310px;top:96px;width:1px;height:3px;background:#787878"></div><div style="left:1318px;top:83px;width:1px;height:16px;background:#787878"></div><div class="t" style="left:1322px;top:84px;height:12px;line-height:12px;font-size:10px;color:#b4bcc8">44</div><div style="left:1326px;top:96px;width:1px;height:3px;background:#787878"></div><div style="left:1335px;top:94px;width:1px;height:5px;background:#787878"></div><div style="left:1343px;top:96px;width:1px;height:3px;background:#787878"></div><div style="left:1351px;top:83px;width:1px;height:16px;background:#787878"></div><div class="t" style="left:1355px;top:84px;height:12px;line-height:12px;font-size:10px;color:#b4bcc8">46</div><div style="left:1359px;top:96px;width:1px;height:3px;background:#787878"></div><div style="left:1367px;top:94px;width:1px;height:5px;background:#787878"></div><div style="left:1376px;top:96px;width:1px;height:3px;background:#787878"></div><div style="left:1384px;top:83px;width:1px;height:16px;background:#787878"></div><div class="t" style="left:1388px;top:84px;height:12px;line-height:12px;font-size:10px;color:#b4bcc8">48</div><div style="left:1392px;top:96px;width:1px;height:3px;background:#787878"></div><div style="left:1400px;top:94px;width:1px;height:5px;background:#787878"></div><div style="left:1408px;top:96px;width:1px;height:3px;background:#787878"></div><div style="left:1417px;top:83px;width:1px;height:16px;background:#787878"></div><div class="t" style="left:1421px;top:84px;height:12px;line-height:12px;font-size:10px;color:#b4bcc8">50</div><div style="left:1425px;top:96px;width:1px;height:3px;background:#787878"></div><div style="left:1433px;top:94px;width:1px;height:5px;background:#787878"></div><div style="left:1441px;top:96px;width:1px;height:3px;background:#787878"></div><div style="left:1450px;top:83px;width:1px;height:16px;background:#787878"></div><div class="t" style="left:1454px;top:84px;height:12px;line-height:12px;font-size:10px;color:#b4bcc8">52</div><div style="left:1458px;top:96px;width:1px;height:3px;background:#787878"></div><div style="left:1466px;top:94px;width:1px;height:5px;background:#787878"></div><div style="left:1474px;top:96px;width:1px;height:3px;background:#787878"></div><div style="left:1482px;top:83px;width:1px;height:16px;background:#787878"></div><div class="t" style="left:1486px;top:84px;height:12px;line-height:12px;font-size:10px;color:#b4bcc8">54</div><div style="left:1491px;top:96px;width:1px;height:3px;background:#787878"></div><div style="left:1499px;top:94px;width:1px;height:5px;background:#787878"></div><div style="left:1507px;top:96px;width:1px;height:3px;background:#787878"></div><div style="left:1515px;top:83px;width:1px;height:16px;background:#787878"></div><div class="t" style="left:1519px;top:84px;height:12px;line-height:12px;font-size:10px;color:#b4bcc8">56</div><div style="left:1524px;top:96px;width:1px;height:3px;background:#787878"></div><div style="left:1532px;top:94px;width:1px;height:5px;background:#787878"></div><div style="left:1540px;top:96px;width:1px;height:3px;background:#787878"></div><div style="left:1548px;top:83px;width:1px;height:16px;background:#787878"></div><div class="t" style="left:1552px;top:84px;height:12px;line-height:12px;font-size:10px;color:#b4bcc8">58</div><div style="left:1556px;top:96px;width:1px;height:3px;background:#787878"></div><div style="left:1565px;top:94px;width:1px;height:5px;background:#787878"></div><div style="left:1573px;top:96px;width:1px;height:3px;background:#787878"></div><div style="left:1581px;top:83px;width:1px;height:16px;background:#787878"></div><div class="t" style="left:1585px;top:84px;height:12px;line-height:12px;font-size:10px;color:#b4bcc8">60</div><div style="left:1589px;top:96px;width:1px;height:3px;background:#787878"></div><div style="left:1598px;top:94px;width:1px;height:5px;background:#787878"></div><div style="left:1606px;top:96px;width:1px;height:3px;background:#787878"></div><div style="left:1614px;top:83px;width:1px;height:16px;background:#787878"></div><div class="t" style="left:1618px;top:84px;height:12px;line-height:12px;font-size:10px;color:#b4bcc8">62</div><div style="left:54px;top:105px;width:3px;height:1px;background:#787878"></div><div style="left:41px;top:113px;width:16px;height:1px;background:#787878"></div><div class="t" style="left:44px;top:115px;height:11px;line-height:11px;font-size:10px;color:#b4bcc8">2</div><div style="left:54px;top:121px;width:3px;height:1px;background:#787878"></div><div style="left:52px;top:129px;width:5px;height:1px;background:#787878"></div><div style="left:54px;top:138px;width:3px;height:1px;background:#787878"></div><div style="left:41px;top:146px;width:16px;height:1px;background:#787878"></div><div class="t" style="left:44px;top:148px;height:11px;line-height:11px;font-size:10px;color:#b4bcc8">4</div><div style="left:54px;top:154px;width:3px;height:1px;background:#787878"></div><div style="left:52px;top:162px;width:5px;height:1px;background:#787878"></div><div style="left:54px;top:170px;width:3px;height:1px;background:#787878"></div><div style="left:41px;top:179px;width:16px;height:1px;background:#787878"></div><div class="t" style="left:44px;top:181px;height:11px;line-height:11px;font-size:10px;color:#b4bcc8">6</div><div style="left:54px;top:187px;width:3px;height:1px;background:#787878"></div><div style="left:52px;top:195px;width:5px;height:1px;background:#787878"></div><div style="left:54px;top:203px;width:3px;height:1px;background:#787878"></div><div style="left:41px;top:211px;width:16px;height:1px;background:#787878"></div><div class="t" style="left:44px;top:213px;height:11px;line-height:11px;font-size:10px;color:#b4bcc8">8</div><div style="left:54px;top:220px;width:3px;height:1px;background:#787878"></div><div style="left:52px;top:228px;width:5px;height:1px;background:#787878"></div><div style="left:54px;top:236px;width:3px;height:1px;background:#787878"></div><div style="left:41px;top:244px;width:16px;height:1px;background:#787878"></div><div class="t" style="left:44px;top:246px;height:11px;line-height:11px;font-size:10px;color:#b4bcc8">1</div><div class="t" style="left:44px;top:256px;height:11px;line-height:11px;font-size:10px;color:#b4bcc8">0</div><div style="left:54px;top:253px;width:3px;height:1px;background:#787878"></div><div style="left:52px;top:261px;width:5px;height:1px;background:#787878"></div><div style="left:54px;top:269px;width:3px;height:1px;background:#787878"></div><div style="left:41px;top:277px;width:16px;height:1px;background:#787878"></div><div class="t" style="left:44px;top:279px;height:11px;line-height:11px;font-size:10px;color:#b4bcc8">1</div><div class="t" style="left:44px;top:289px;height:11px;line-height:11px;font-size:10px;color:#b4bcc8">2</div><div style="left:54px;top:285px;width:3px;height:1px;background:#787878"></div><div style="left:52px;top:294px;width:5px;height:1px;background:#787878"></div><div style="left:54px;top:302px;width:3px;height:1px;background:#787878"></div><div style="left:41px;top:310px;width:16px;height:1px;background:#787878"></div><div class="t" style="left:44px;top:312px;height:11px;line-height:11px;font-size:10px;color:#b4bcc8">1</div><div class="t" style="left:44px;top:322px;height:11px;line-height:11px;font-size:10px;color:#b4bcc8">4</div><div style="left:54px;top:318px;width:3px;height:1px;background:#787878"></div><div style="left:52px;top:326px;width:5px;height:1px;background:#787878"></div><div style="left:54px;top:335px;width:3px;height:1px;background:#787878"></div><div style="left:41px;top:343px;width:16px;height:1px;background:#787878"></div><div class="t" style="left:44px;top:345px;height:11px;line-height:11px;font-size:10px;color:#b4bcc8">1</div><div class="t" style="left:44px;top:355px;height:11px;line-height:11px;font-size:10px;color:#b4bcc8">6</div><div style="left:54px;top:351px;width:3px;height:1px;background:#787878"></div><div style="left:52px;top:359px;width:5px;height:1px;background:#787878"></div><div style="left:54px;top:367px;width:3px;height:1px;background:#787878"></div><div style="left:41px;top:376px;width:16px;height:1px;background:#787878"></div><div class="t" style="left:44px;top:378px;height:11px;line-height:11px;font-size:10px;color:#b4bcc8">1</div><div class="t" style="left:44px;top:388px;height:11px;line-height:11px;font-size:10px;color:#b4bcc8">8</div><div style="left:54px;top:384px;width:3px;height:1px;background:#787878"></div><div style="left:52px;top:392px;width:5px;height:1px;background:#787878"></div><div style="left:54px;top:400px;width:3px;height:1px;background:#787878"></div><div style="left:41px;top:408px;width:16px;height:1px;background:#787878"></div><div class="t" style="left:44px;top:410px;height:11px;line-height:11px;font-size:10px;color:#b4bcc8">2</div><div class="t" style="left:44px;top:420px;height:11px;line-height:11px;font-size:10px;color:#b4bcc8">0</div><div style="left:54px;top:417px;width:3px;height:1px;background:#787878"></div><div style="left:52px;top:425px;width:5px;height:1px;background:#787878"></div><div style="left:54px;top:433px;width:3px;height:1px;background:#787878"></div><div style="left:41px;top:441px;width:16px;height:1px;background:#787878"></div><div class="t" style="left:44px;top:443px;height:11px;line-height:11px;font-size:10px;color:#b4bcc8">2</div><div class="t" style="left:44px;top:453px;height:11px;line-height:11px;font-size:10px;color:#b4bcc8">2</div><div style="left:54px;top:449px;width:3px;height:1px;background:#787878"></div><div style="left:52px;top:458px;width:5px;height:1px;background:#787878"></div><div style="left:54px;top:466px;width:3px;height:1px;background:#787878"></div><div style="left:41px;top:474px;width:16px;height:1px;background:#787878"></div><div class="t" style="left:44px;top:476px;height:11px;line-height:11px;font-size:10px;color:#b4bcc8">2</div><div class="t" style="left:44px;top:486px;height:11px;line-height:11px;font-size:10px;color:#b4bcc8">4</div><div style="left:54px;top:482px;width:3px;height:1px;background:#787878"></div><div style="left:52px;top:490px;width:5px;height:1px;background:#787878"></div><div style="left:54px;top:499px;width:3px;height:1px;background:#787878"></div><div style="left:41px;top:507px;width:16px;height:1px;background:#787878"></div><div class="t" style="left:44px;top:509px;height:11px;line-height:11px;font-size:10px;color:#b4bcc8">2</div><div class="t" style="left:44px;top:519px;height:11px;line-height:11px;font-size:10px;color:#b4bcc8">6</div><div style="left:54px;top:515px;width:3px;height:1px;background:#787878"></div><div style="left:52px;top:523px;width:5px;height:1px;background:#787878"></div><div style="left:54px;top:531px;width:3px;height:1px;background:#787878"></div><div style="left:41px;top:540px;width:16px;height:1px;background:#787878"></div><div class="t" style="left:44px;top:542px;height:11px;line-height:11px;font-size:10px;color:#b4bcc8">2</div><div class="t" style="left:44px;top:552px;height:11px;line-height:11px;font-size:10px;color:#b4bcc8">8</div><div style="left:54px;top:548px;width:3px;height:1px;background:#787878"></div><div style="left:52px;top:556px;width:5px;height:1px;background:#787878"></div><div style="left:54px;top:564px;width:3px;height:1px;background:#787878"></div><div style="left:41px;top:573px;width:16px;height:1px;background:#787878"></div><div class="t" style="left:44px;top:575px;height:11px;line-height:11px;font-size:10px;color:#b4bcc8">3</div><div class="t" style="left:44px;top:585px;height:11px;line-height:11px;font-size:10px;color:#b4bcc8">0</div><div style="left:54px;top:581px;width:3px;height:1px;background:#787878"></div><div style="left:52px;top:589px;width:5px;height:1px;background:#787878"></div><div style="left:54px;top:597px;width:3px;height:1px;background:#787878"></div><div style="left:41px;top:605px;width:16px;height:1px;background:#787878"></div><div class="t" style="left:44px;top:607px;height:11px;line-height:11px;font-size:10px;color:#b4bcc8">3</div><div class="t" style="left:44px;top:617px;height:11px;line-height:11px;font-size:10px;color:#b4bcc8">2</div><div style="left:54px;top:614px;width:3px;height:1px;background:#787878"></div><div style="left:52px;top:622px;width:5px;height:1px;background:#787878"></div><div style="left:54px;top:630px;width:3px;height:1px;background:#787878"></div><div style="left:41px;top:638px;width:16px;height:1px;background:#787878"></div><div class="t" style="left:44px;top:640px;height:11px;line-height:11px;font-size:10px;color:#b4bcc8">3</div><div class="t" style="left:44px;top:650px;height:11px;line-height:11px;font-size:10px;color:#b4bcc8">4</div><div style="left:54px;top:646px;width:3px;height:1px;background:#787878"></div><div style="left:52px;top:655px;width:5px;height:1px;background:#787878"></div><div style="left:54px;top:663px;width:3px;height:1px;background:#787878"></div><div style="left:41px;top:671px;width:16px;height:1px;background:#787878"></div><div class="t" style="left:44px;top:673px;height:11px;line-height:11px;font-size:10px;color:#b4bcc8">3</div><div class="t" style="left:44px;top:683px;height:11px;line-height:11px;font-size:10px;color:#b4bcc8">6</div><div style="left:54px;top:679px;width:3px;height:1px;background:#787878"></div><div style="left:52px;top:687px;width:5px;height:1px;background:#787878"></div><div style="left:54px;top:696px;width:3px;height:1px;background:#787878"></div><div style="left:41px;top:704px;width:16px;height:1px;background:#787878"></div><div class="t" style="left:44px;top:706px;height:11px;line-height:11px;font-size:10px;color:#b4bcc8">3</div><div class="t" style="left:44px;top:716px;height:11px;line-height:11px;font-size:10px;color:#b4bcc8">8</div><div style="left:54px;top:712px;width:3px;height:1px;background:#787878"></div><div style="left:52px;top:720px;width:5px;height:1px;background:#787878"></div><div style="left:54px;top:728px;width:3px;height:1px;background:#787878"></div><div style="left:41px;top:737px;width:16px;height:1px;background:#787878"></div><div class="t" style="left:44px;top:739px;height:11px;line-height:11px;font-size:10px;color:#b4bcc8">4</div><div class="t" style="left:44px;top:749px;height:11px;line-height:11px;font-size:10px;color:#b4bcc8">0</div><div style="left:54px;top:745px;width:3px;height:1px;background:#787878"></div><div style="left:52px;top:753px;width:5px;height:1px;background:#787878"></div><div style="left:54px;top:761px;width:3px;height:1px;background:#787878"></div><div style="left:41px;top:769px;width:16px;height:1px;background:#787878"></div><div class="t" style="left:44px;top:771px;height:11px;line-height:11px;font-size:10px;color:#b4bcc8">4</div><div class="t" style="left:44px;top:781px;height:11px;line-height:11px;font-size:10px;color:#b4bcc8">2</div><div style="left:54px;top:778px;width:3px;height:1px;background:#787878"></div><div style="left:52px;top:786px;width:5px;height:1px;background:#787878"></div><div style="left:54px;top:794px;width:3px;height:1px;background:#787878"></div><div style="left:41px;top:802px;width:16px;height:1px;background:#787878"></div><div class="t" style="left:44px;top:804px;height:11px;line-height:11px;font-size:10px;color:#b4bcc8">4</div><div class="t" style="left:44px;top:814px;height:11px;line-height:11px;font-size:10px;color:#b4bcc8">4</div><div style="left:54px;top:810px;width:3px;height:1px;background:#787878"></div><div style="left:52px;top:819px;width:5px;height:1px;background:#787878"></div><div style="left:54px;top:827px;width:3px;height:1px;background:#787878"></div><div style="left:41px;top:835px;width:16px;height:1px;background:#787878"></div><div class="t" style="left:44px;top:837px;height:11px;line-height:11px;font-size:10px;color:#b4bcc8">4</div><div class="t" style="left:44px;top:847px;height:11px;line-height:11px;font-size:10px;color:#b4bcc8">6</div><div style="left:54px;top:843px;width:3px;height:1px;background:#787878"></div><div style="left:52px;top:851px;width:5px;height:1px;background:#787878"></div><div style="left:54px;top:860px;width:3px;height:1px;background:#787878"></div><div style="left:41px;top:868px;width:16px;height:1px;background:#787878"></div><div class="t" style="left:44px;top:870px;height:11px;line-height:11px;font-size:10px;color:#b4bcc8">4</div><div style="left:54px;top:876px;width:3px;height:1px;background:#787878"></div>
<div style="left:1147px;top:84px;width:1px;height:15px;background:repeating-linear-gradient(0deg,#ccc 0 1px,transparent 1px 2px);"></div>
<div style="left:42px;top:665px;width:15px;height:1px;background:repeating-linear-gradient(90deg,#ddd 0 1px,transparent 1px 2px);"></div>
<div style="left:58px;top:100px;width:1562px;height:781px;background:#282828;"></div>
<div style="left:595px;top:100px;width:488px;height:781px;background:#ffffff;"></div>
<div style="left:647px;top:165px;width:45px;height:53px;background:linear-gradient(90deg,#88888b 0%,#828185 35%,#77767c 60%,#5f5e6b 85%,#4f4e5e 100%);border:1px solid #55545c;border-bottom:none;"></div>
<div style="left:975px;top:165px;width:45px;height:53px;background:linear-gradient(90deg,#88888b 0%,#828185 35%,#77767c 60%,#5f5e6b 85%,#4f4e5e 100%);border:1px solid #55545c;border-bottom:none;"></div>
<div style="left:612px;top:217px;width:212px;height:56px;background:#7e7d82;border:1px solid #55545a;"></div>
<div style="left:841px;top:217px;width:213px;height:56px;background:#7e7d82;border:1px solid #55545a;"></div>
<div style="left:776px;top:315px;width:45px;height:54px;background:linear-gradient(90deg,#88888b 0%,#828185 35%,#77767c 60%,#5f5e6b 85%,#4f4e5e 100%);border:1px solid #55545c;border-bottom:none;"></div>
<div style="left:847px;top:315px;width:44px;height:54px;background:linear-gradient(90deg,#88888b 0%,#828185 35%,#77767c 60%,#5f5e6b 85%,#4f4e5e 100%);border:1px solid #55545c;border-bottom:none;"></div>
<div style="left:615px;top:368px;width:207px;height:55px;background:#7e7d82;border:1px solid #55545a;"></div>
<div style="left:846px;top:368px;width:206px;height:55px;background:#7e7d82;border:1px solid #55545a;"></div>
<div style="left:612px;top:460px;width:212px;height:204px;background:#7e7d82;border:1px solid #55545a;"></div>
<div style="left:841px;top:462px;width:213px;height:205px;background:#7e7d82;border:1px solid #55545a;"></div>
<svg style="left:0;top:0" width="1917" height="900" viewBox="0 0 1917 900"><defs><linearGradient id="cg" x1="0" x2="1" y1="0" y2="0"><stop offset="0" stop-color="#8a8a8b"/><stop offset="0.400" stop-color="#888889"/><stop offset="0.650" stop-color="#717078"/><stop offset="1" stop-color="#525162"/></linearGradient><linearGradient id="cy2" x1="0" x2="1"><stop offset="0" stop-color="#88888b"/><stop offset="0.450" stop-color="#7c7b81"/><stop offset="1" stop-color="#525163"/></linearGradient></defs><path d="M757 168.5 L727.5 217.5 L786.5 217.5 Z" fill="url(#cg)" stroke="#5a5a62" stroke-width="0.600"/><path d="M909 168.5 L879.5 217.5 L938.5 217.5 Z" fill="url(#cg)" stroke="#5a5a62" stroke-width="0.600"/><path d="M672.5 319 L643 368.5 L702 368.5 Z" fill="url(#cg)" stroke="#5a5a62" stroke-width="0.600"/><path d="M994.5 319 L965 368.5 L1024 368.5 Z" fill="url(#cg)" stroke="#5a5a62" stroke-width="0.600"/><circle cx="669.500" cy="641" r="21.500" fill="none" stroke="#55545c" stroke-width="0.800"/><path d="M841.300 769.200 L905 719.700 L1053 743 L988.300 792.200 Z" fill="#7e7d82" stroke="#55545c" stroke-width="0.600"/><path d="M841.300 769.200 L988.300 792.200 L988.300 831.700 L841.300 809.200 Z" fill="#7e7d82" stroke="#55545c" stroke-width="0.600"/><path d="M988.300 792.200 L1053 743 L1053 781.700 L988.300 831.700 Z" fill="#525163" stroke="#4a4958" stroke-width="0.600"/><path d="M872 733 L872 770 A17 6.300 0 0 0 906 770 L906 733 Z" fill="url(#cy2)" stroke="#55545c" stroke-width="0.600"/><ellipse cx="889" cy="733" rx="17" ry="6.300" fill="#7f7e83" stroke="#55545c" stroke-width="0.600"/><ellipse cx="988.300" cy="748" rx="22" ry="9.500" fill="url(#cg)" stroke="#5a5a62" stroke-width="0.600"/><path d="M988 715 L966.800 746 Q988 756 1009.800 746 Z" fill="url(#cg)"/><path d="M966.800 746 L988 715 L1009.800 746" fill="none" stroke="#5a5a62" stroke-width="0.600"/></svg>
<div style="left:727px;top:487px;width:59px;height:59px;background:conic-gradient(from 0deg,#615f6e 0deg,#525164 45deg,#59586a 90deg,#6c6b77 135deg,#7f7e84 180deg,#8b8b8c 225deg,#84848a 270deg,#6f6e7a 315deg,#615f6e 360deg);border-radius:50%;border:1px solid #4a4952;"></div>
<div style="left:610px;top:100px;width:1px;height:781px;background:#4affff;"></div>
<div style="left:824px;top:100px;width:1px;height:781px;background:#4affff;"></div>
<div style="left:840px;top:100px;width:1px;height:781px;background:#4affff;"></div>
<div style="left:1054px;top:100px;width:1px;height:781px;background:#4affff;"></div>
<div style="left:58px;top:164px;width:1562px;height:1px;background:#4affff;"></div>
<div style="left:58px;top:273px;width:1562px;height:1px;background:#4affff;"></div>
<div style="left:58px;top:391px;width:1562px;height:1px;background:#4affff;"></div>
<div style="left:1067px;top:496px;width:8px;height:1px;background:#8eeaf2;"></div>
<div style="left:1620px;top:83px;width:16px;height:798px;background:linear-gradient(90deg,#323232,#424242 45%,#424242);"></div>
<div style="left:1620px;top:83px;width:16px;height:16px;background:#3a3a3a;"></div>
<svg style="left:1625px;top:89px;" width="7" height="4" viewBox="0 0 7 4"><path d="M0 4 h6 l-3 -3.500z" fill="#f0f0f0"/></svg>
<svg style="left:1625px;top:873px;" width="7" height="4" viewBox="0 0 7 4"><path d="M0 0 h6 l-3 3.500z" fill="#f0f0f0"/></svg>
<div style="left:1622px;top:347px;width:12px;height:270px;background:linear-gradient(90deg,#8e8e8e,#6c6c6c);border-radius:3px;"></div>
<div style="left:1636px;top:63px;width:3px;height:837px;background:#323232;"></div>
<div style="left:1637px;top:75px;width:1px;height:825px;background:#3c3c3c;"></div>
<div style="left:41px;top:881px;width:1596px;height:16px;background:linear-gradient(#333333 0,#3a3a3a 2px,#484848 100%);"></div>
<div style="left:41px;top:881px;width:48px;height:16px;background:#3f3f3f;"></div>
<div class="t" style="left:46px;top:881px;height:16px;line-height:16px;font-size:11px;color:#f0f0f0;">16.67%</div>
<div style="left:89px;top:881px;width:24px;height:16px;background:#4e4e4e;border-left:1px solid #333;border-right:1px solid #333;"></div>
<svg style="left:94px;top:882px;" width="14" height="14" viewBox="0 0 14 14"><circle cx="7" cy="7" r="6" fill="#c8c8c8"/><path d="M4 4 h4 l2 2 v4 h-6z" fill="#555"/><path d="M5 6 h3 v3 h-3z" fill="#c8c8c8"/></svg>
<div style="left:113px;top:881px;width:171px;height:16px;background:#505050;"></div>
<div class="t" style="left:147px;top:881px;height:16px;line-height:16px;font-size:11px;color:#f0f0f0;letter-spacing:0.2px;">文档:41.2M/102.5M</div>
<div style="left:284px;top:881px;width:13px;height:16px;background:#585858;border-left:1px solid #333;"></div>
<svg style="left:288px;top:884px;" width="7" height="10" viewBox="0 0 7 10"><path d="M0.500 0.500 v9 l6 -4.500z" fill="#f0f0f0"/></svg>
<svg style="left:301px;top:886px;" width="5" height="7" viewBox="0 0 5 7"><path d="M4.500 0 v7 l-4 -3.500z" fill="#e6e6e6"/></svg>
<svg style="left:1611px;top:886px;" width="5" height="7" viewBox="0 0 5 7"><path d="M0.500 0 v7 l4 -3.500z" fill="#e6e6e6"/></svg>
<div style="left:665px;top:883px;width:587px;height:12px;background:linear-gradient(#8c8c8c,#6c6c6c);border-radius:3px;"></div>
<div style="left:1620px;top:881px;width:16px;height:16px;background:#555555;"></div>
<div style="left:41px;top:897px;width:1596px;height:1px;background:#2e2e2e;"></div>
<div style="left:41px;top:898px;width:1596px;height:2px;background:#3c3c3c;"></div>
<div style="left:1412px;top:99px;width:210px;height:154px;background:#535353;box-shadow:0 0 0 1px #2a2a2a;"></div>
<div style="left:1412px;top:99px;width:210px;height:13px;background:#363636;border-bottom:1px solid #2c2c2c;border-radius:3px 3px 0 0;"></div>
<svg style="left:1594px;top:102px;" width="8" height="6" viewBox="0 0 8 6"><path d="M3.500 0 v6 l-3.500 -3z M7.500 0 v6 l-3.500 -3z" fill="#e0e0e0"/></svg>
<svg style="left:1610px;top:102px;" width="8" height="7" viewBox="0 0 8 7"><path d="M1 0.500 l5.500 5.500 M6.500 0.500 l-5.500 5.500" stroke="#e0e0e0" stroke-width="1.300"/></svg>
<div style="left:1412px;top:112px;width:210px;height:17px;background:#3f3f3f;border-bottom:1px solid #333;"></div>
<div style="left:1412px;top:112px;width:62px;height:17px;background:#535353;border-right:1px solid #333;border-top:1px solid #626262;"></div>
<div class="t" style="left:1419px;top:113px;height:17px;line-height:17px;font-size:12px;color:#d0d4da;">历史记录</div>
<svg style="left:1605px;top:117px;" width="14" height="8" viewBox="0 0 14 8"><path d="M0 1 h5 l-2.500 3z" fill="#d0d0d0"/><rect x="6" y="0" width="7" height="1" fill="#d0d0d0"/><rect x="6" y="2" width="7" height="1" fill="#d0d0d0"/><rect x="6" y="4" width="7" height="1" fill="#d0d0d0"/><rect x="6" y="6" width="7" height="1" fill="#d0d0d0"/></svg>
<div style="left:1412px;top:129px;width:210px;height:5px;background:#535353;"></div>
<div style="left:1412px;top:130px;width:194px;height:1px;background:#3e3e3e;"></div>
<div style="left:1412px;top:134px;width:194px;height:1px;background:#3e3e3e;"></div>
<div style="left:1412px;top:135px;width:194px;height:22px;background:#535353;"></div>
<div style="left:1412px;top:157px;width:194px;height:1px;background:#3e3e3e;"></div>
<div style="left:1418px;top:140px;width:12px;height:12px;background:#4d4d4d;border:1px solid;border-color:#6a6a6a #333 #333 #6a6a6a;"></div>
<svg style="left:1444px;top:137px;" width="14" height="17" viewBox="0 0 14 17"><path d="M0.500 3.500 v-2 h9 v2" fill="#c4c4c4" stroke="#bcbcbc" stroke-width="1"/><rect x="0.500" y="3.500" width="13" height="12" fill="#454545" stroke="#bcbcbc" stroke-width="1"/><rect x="2.500" y="6" width="9" height="1" fill="#e0e0e0"/><rect x="2.500" y="8" width="9" height="1" fill="#e0e0e0"/><rect x="2.500" y="10" width="9" height="1" fill="#e0e0e0"/><rect x="2.500" y="12" width="9" height="1" fill="#e0e0e0"/></svg>
<div class="t" style="left:1471px;top:138px;height:17px;line-height:17px;font-size:12px;color:#f0f0f0;">名称更改</div>
<div style="left:1412px;top:158px;width:194px;height:22px;background:#535353;"></div>
<div style="left:1412px;top:180px;width:194px;height:1px;background:#3e3e3e;"></div>
<div style="left:1418px;top:163px;width:12px;height:12px;background:#4d4d4d;border:1px solid;border-color:#6a6a6a #333 #333 #6a6a6a;"></div>
<svg style="left:1444px;top:160px;" width="14" height="17" viewBox="0 0 14 17"><path d="M0.500 3.500 v-2 h9 v2" fill="#c4c4c4" stroke="#bcbcbc" stroke-width="1"/><rect x="0.500" y="3.500" width="13" height="12" fill="#454545" stroke="#bcbcbc" stroke-width="1"/><rect x="2.500" y="6" width="9" height="1" fill="#e0e0e0"/><rect x="2.500" y="8" width="9" height="1" fill="#e0e0e0"/><rect x="2.500" y="10" width="9" height="1" fill="#e0e0e0"/><rect x="2.500" y="12" width="9" height="1" fill="#e0e0e0"/></svg>
<div class="t" style="left:1471px;top:161px;height:17px;line-height:17px;font-size:12px;color:#f0f0f0;">拖移参考线</div>
<div style="left:1412px;top:181px;width:194px;height:22px;background:#535353;"></div>
<div style="left:1412px;top:203px;width:194px;height:1px;background:#3e3e3e;"></div>
<div style="left:1418px;top:186px;width:12px;height:12px;background:#4d4d4d;border:1px solid;border-color:#6a6a6a #333 #333 #6a6a6a;"></div>
<svg style="left:1444px;top:183px;" width="14" height="17" viewBox="0 0 14 17"><path d="M0.500 3.500 v-2 h9 v2" fill="#c4c4c4" stroke="#bcbcbc" stroke-width="1"/><rect x="0.500" y="3.500" width="13" height="12" fill="#454545" stroke="#bcbcbc" stroke-width="1"/><rect x="2.500" y="6" width="9" height="1" fill="#e0e0e0"/><rect x="2.500" y="8" width="9" height="1" fill="#e0e0e0"/><rect x="2.500" y="10" width="9" height="1" fill="#e0e0e0"/><rect x="2.500" y="12" width="9" height="1" fill="#e0e0e0"/></svg>
<div class="t" style="left:1471px;top:184px;height:17px;line-height:17px;font-size:12px;color:#f0f0f0;">删除参考线</div>
<div style="left:1412px;top:204px;width:194px;height:22px;background:#586578;"></div>
<div style="left:1412px;top:226px;width:194px;height:1px;background:#3e3e3e;"></div>
<div style="left:1418px;top:209px;width:12px;height:12px;background:#535f71;border:1px solid;border-color:#6a6a6a #333 #333 #6a6a6a;"></div>
<svg style="left:1444px;top:206px;" width="14" height="17" viewBox="0 0 14 17"><path d="M0.500 3.500 v-2 h9 v2" fill="#c4c4c4" stroke="#bcbcbc" stroke-width="1"/><rect x="0.500" y="3.500" width="13" height="12" fill="#454545" stroke="#bcbcbc" stroke-width="1"/><rect x="2.500" y="6" width="9" height="1" fill="#e0e0e0"/><rect x="2.500" y="8" width="9" height="1" fill="#e0e0e0"/><rect x="2.500" y="10" width="9" height="1" fill="#e0e0e0"/><rect x="2.500" y="12" width="9" height="1" fill="#e0e0e0"/></svg>
<div class="t" style="left:1471px;top:207px;height:17px;line-height:17px;font-size:12px;color:#f0f0f0;">删除参考线</div>
<div style="left:1606px;top:129px;width:16px;height:98px;background:#3f3f3f;"></div>
<svg style="left:1611px;top:137px;" width="7" height="4" viewBox="0 0 7 4"><path d="M0 4 h7 l-3.500 -4z" fill="#e6e6e6"/></svg>
<svg style="left:1611px;top:217px;" width="7" height="4" viewBox="0 0 7 4"><path d="M0 0 h7 l-3.500 4z" fill="#e6e6e6"/></svg>
<div style="left:1608px;top:192px;width:12px;height:17px;background:linear-gradient(90deg,#8e8e8e,#6c6c6c);border-radius:3px;"></div>
<div style="left:1412px;top:227px;width:210px;height:19px;background:#535353;border-top:1px solid #3a3a3a;"></div>
<svg width="0" height="0" style="left:0;top:0"><defs><linearGradient id="fg1" x1="0" x2="0" y1="0" y2="1"><stop offset="0" stop-color="#dcdcdc"/><stop offset="1" stop-color="#a8a8a8"/></linearGradient></defs></svg>
<svg style="left:1520px;top:230px;" width="14" height="12" viewBox="0 0 14 12"><path d="M4.500 0.500 h6 l3 3 v7 h-6 v-3.500 h-3z" fill="url(#fg1)"/><path d="M10.500 0.500 v3 h3" fill="none" stroke="#666" stroke-width="0.800"/><path d="M3.500 5 v7 M0 8.500 h7" stroke="#e4e4e4" stroke-width="2.200"/></svg>
<svg style="left:1552px;top:230px;" width="14" height="12" viewBox="0 0 14 12"><path d="M0 2.500 h3.500 l1 -1.800 h5 l1 1.800 h3.500 v9 h-14z" fill="url(#fg1)"/><circle cx="7" cy="7" r="3" fill="#4a4a4a"/><circle cx="7" cy="7" r="1.700" fill="#bdbdbd"/></svg>
<svg style="left:1582px;top:230px;" width="12" height="12" viewBox="0 0 12 12"><path d="M0 3.500 q6 -3 11.500 0 M4 1.500 q1.800 -1.800 3.600 0" fill="none" stroke="#cfcfcf" stroke-width="1.400"/><path d="M1 4.500 h9.500 l-0.700 7 h-8.100z" fill="none" stroke="#c4c4c4" stroke-width="1.100"/><path d="M3.500 5 v6 M5.750 5 v6 M8 5 v6" stroke="#c4c4c4" stroke-width="1.100"/></svg>
<svg style="left:1611px;top:235px;" width="9" height="9" viewBox="0 0 9 9"><rect x="8" y="0" width="1" height="1" fill="#8a8a8a"/><rect x="8" y="2" width="1" height="1" fill="#8a8a8a"/><rect x="6" y="2" width="1" height="1" fill="#8a8a8a"/><rect x="8" y="4" width="1" height="1" fill="#8a8a8a"/><rect x="6" y="4" width="1" height="1" fill="#8a8a8a"/><rect x="4" y="4" width="1" height="1" fill="#8a8a8a"/><rect x="8" y="6" width="1" height="1" fill="#8a8a8a"/><rect x="6" y="6" width="1" height="1" fill="#8a8a8a"/><rect x="4" y="6" width="1" height="1" fill="#8a8a8a"/><rect x="2" y="6" width="1" height="1" fill="#8a8a8a"/><rect x="8" y="8" width="1" height="1" fill="#8a8a8a"/><rect x="6" y="8" width="1" height="1" fill="#8a8a8a"/><rect x="4" y="8" width="1" height="1" fill="#8a8a8a"/><rect x="2" y="8" width="1" height="1" fill="#8a8a8a"/><rect x="0" y="8" width="1" height="1" fill="#8a8a8a"/></svg>
<div style="left:1412px;top:245px;width:210px;height:8px;background:#535353;border-top:1px solid #333;"></div>
<div style="left:1507px;top:248px;width:1px;height:3px;background:#2c2c2c;"></div>
<div style="left:1509px;top:248px;width:1px;height:3px;background:#2c2c2c;"></div>
<div style="left:1511px;top:248px;width:1px;height:3px;background:#2c2c2c;"></div>
<div style="left:1513px;top:248px;width:1px;height:3px;background:#2c2c2c;"></div>
<div style="left:1515px;top:248px;width:1px;height:3px;background:#2c2c2c;"></div>
<div style="left:1517px;top:248px;width:1px;height:3px;background:#2c2c2c;"></div>
<div style="left:1519px;top:248px;width:1px;height:3px;background:#2c2c2c;"></div>
<div style="left:1521px;top:248px;width:1px;height:3px;background:#2c2c2c;"></div>
<div style="left:1523px;top:248px;width:1px;height:3px;background:#2c2c2c;"></div>
<div style="left:1525px;top:248px;width:1px;height:3px;background:#2c2c2c;"></div>
<div style="left:1639px;top:63px;width:278px;height:11px;background:#373737;"></div>
<div style="left:1639px;top:74px;width:278px;height:1px;background:#2c2c2c;"></div>
<svg style="left:1665px;top:66px;" width="8" height="6" viewBox="0 0 8 6"><path d="M3.500 0 v6 l-3.500 -3z M7.500 0 v6 l-3.500 -3z" fill="#dcdcdc"/></svg>
<svg style="left:1907px;top:66px;" width="8" height="6" viewBox="0 0 8 6"><path d="M0 0 v6 l3.500 -3z M4 0 v6 l3.500 -3z" fill="#dcdcdc"/></svg>
<div style="left:1639px;top:75px;width:37px;height:825px;background:#535353;"></div>
<div style="left:1639px;top:75px;width:37px;height:1px;background:#626262;"></div>
<div style="left:1639px;top:115px;width:37px;height:1px;background:#333;"></div>
<div style="left:1639px;top:116px;width:37px;height:1px;background:#606060;"></div>
<div style="left:1676px;top:75px;width:3px;height:825px;background:#333333;"></div>
<div style="left:1648px;top:79px;width:1px;height:3px;background:#303030;"></div>
<div style="left:1650px;top:79px;width:1px;height:3px;background:#303030;"></div>
<div style="left:1652px;top:79px;width:1px;height:3px;background:#303030;"></div>
<div style="left:1654px;top:79px;width:1px;height:3px;background:#303030;"></div>
<div style="left:1656px;top:79px;width:1px;height:3px;background:#303030;"></div>
<div style="left:1658px;top:79px;width:1px;height:3px;background:#303030;"></div>
<div style="left:1660px;top:79px;width:1px;height:3px;background:#303030;"></div>
<div style="left:1662px;top:79px;width:1px;height:3px;background:#303030;"></div>
<div style="left:1664px;top:79px;width:1px;height:3px;background:#303030;"></div>
<div style="left:1666px;top:79px;width:1px;height:3px;background:#303030;"></div>
<svg style="left:1650px;top:88px;" width="18" height="19" viewBox="0 0 18 19"><path d="M1.500 4 l4.500 -2.500 l4.500 2.500 v5.500 l-4.500 2.500 l-4.500 -2.500z" fill="#8a8a8a" stroke="#d4d4d4" stroke-width="1"/><path d="M1.500 4 l4.500 2.500 l4.500 -2.500 M6 6.500 v5.500" fill="none" stroke="#d4d4d4" stroke-width="1"/><rect x="12" y="1" width="4" height="3.500" fill="#c4c4c4"/><rect x="12" y="6.500" width="4" height="3.500" fill="#c4c4c4"/><rect x="1" y="14" width="15" height="4" fill="#b4b4b4"/><path d="M12 15 h3.500 l-1.750 2.200z" fill="#222"/></svg>
<div style="left:1679px;top:75px;width:238px;height:17px;background:#3f3f3f;border-bottom:1px solid #333;"></div>
<div style="left:1679px;top:75px;width:38px;height:17px;background:#535353;border-right:1px solid #333;border-top:1px solid #626262;"></div>
<div class="t" style="left:1686px;top:76px;height:17px;line-height:17px;font-size:12px;color:#dfe3e8;">颜色</div>
<div style="left:1717px;top:75px;width:38px;height:16px;background:#454545;border-right:1px solid #333;border-top:1px solid #505050;"></div>
<div class="t" style="left:1724px;top:76px;height:17px;line-height:17px;font-size:12px;color:#8f98a4;">色板</div>
<svg style="left:1901px;top:80px;" width="14" height="8" viewBox="0 0 14 8"><path d="M0 1 h5 l-2.500 3z" fill="#d0d0d0"/><rect x="6" y="0" width="7" height="1" fill="#d0d0d0"/><rect x="6" y="2" width="7" height="1" fill="#d0d0d0"/><rect x="6" y="4" width="7" height="1" fill="#d0d0d0"/><rect x="6" y="6" width="7" height="1" fill="#d0d0d0"/></svg>
<div style="left:1679px;top:92px;width:238px;height:112px;background:#535353;"></div>
<div style="left:1679px;top:204px;width:238px;height:3px;background:#333333;"></div>
<div style="left:1694px;top:113px;width:19px;height:19px;background:#444444;border:1px solid #ffffff;box-shadow:0 0 0 1px #3a3a3a;"></div>
<div style="left:1683px;top:102px;width:22px;height:22px;background:#ffffff;border:1px solid #8c8c8c;box-shadow:inset 0 0 0 1px #333;"></div>
<div class="t" style="left:1722px;top:103px;height:17px;line-height:17px;font-size:12px;color:#f0f0f0;">R</div>
<div style="left:1739px;top:105px;width:81px;height:5px;background:linear-gradient(90deg,#00ffff,#ffffff);box-shadow:0 0 0 1px #4a4a4a;"></div>
<svg style="left:1813px;top:111px;" width="11" height="9" viewBox="0 0 11 9"><defs><linearGradient id="thR" x1="0" x2="0" y1="0" y2="1"><stop offset="0" stop-color="#d8d8d8"/><stop offset="1" stop-color="#7a7a7a"/></linearGradient></defs><path d="M5.500 0.500 L10 5 V8.500 H1 V5 Z" fill="url(#thR)" stroke="#444" stroke-width="0.800"/></svg>
<div style="left:1825px;top:103px;width:51px;height:20px;background:#3a3a3a;border:1px solid #2e2e2e;box-shadow:0 1px 0 #606060;"></div>
<div class="t" style="left:1828px;top:105px;height:17px;line-height:17px;font-size:11px;color:#f0f0f0;">255</div>
<div class="t" style="left:1722px;top:128px;height:17px;line-height:17px;font-size:12px;color:#f0f0f0;">G</div>
<div style="left:1739px;top:130px;width:81px;height:5px;background:linear-gradient(90deg,#ff00ff,#ffffff);box-shadow:0 0 0 1px #4a4a4a;"></div>
<svg style="left:1813px;top:136px;" width="11" height="9" viewBox="0 0 11 9"><defs><linearGradient id="thG" x1="0" x2="0" y1="0" y2="1"><stop offset="0" stop-color="#d8d8d8"/><stop offset="1" stop-color="#7a7a7a"/></linearGradient></defs><path d="M5.500 0.500 L10 5 V8.500 H1 V5 Z" fill="url(#thG)" stroke="#444" stroke-width="0.800"/></svg>
<div style="left:1825px;top:128px;width:51px;height:20px;background:#3a3a3a;border:1px solid #2e2e2e;box-shadow:0 1px 0 #606060;"></div>
<div class="t" style="left:1828px;top:130px;height:17px;line-height:17px;font-size:11px;color:#f0f0f0;">255</div>
<div class="t" style="left:1722px;top:153px;height:17px;line-height:17px;font-size:12px;color:#f0f0f0;">B</div>
<div style="left:1739px;top:155px;width:81px;height:5px;background:linear-gradient(90deg,#ffff00,#ffffff);box-shadow:0 0 0 1px #4a4a4a;"></div>
<svg style="left:1813px;top:161px;" width="11" height="9" viewBox="0 0 11 9"><defs><linearGradient id="thB" x1="0" x2="0" y1="0" y2="1"><stop offset="0" stop-color="#d8d8d8"/><stop offset="1" stop-color="#7a7a7a"/></linearGradient></defs><path d="M5.500 0.500 L10 5 V8.500 H1 V5 Z" fill="url(#thB)" stroke="#444" stroke-width="0.800"/></svg>
<div style="left:1825px;top:153px;width:51px;height:20px;background:#3a3a3a;border:1px solid #2e2e2e;box-shadow:0 1px 0 #606060;"></div>
<div class="t" style="left:1828px;top:155px;height:17px;line-height:17px;font-size:11px;color:#f0f0f0;">255</div>
<div style="left:1685px;top:184px;width:200px;height:15px;background:linear-gradient(180deg,rgba(255,255,255,1) 0%,rgba(255,255,255,0) 45%,rgba(0,0,0,0) 45%,rgba(0,0,0,0.55) 75%,rgba(0,0,0,1) 100%),linear-gradient(90deg,#ff0000 0%,#ffff00 16.600%,#00ff00 33.300%,#00ffff 50%,#0000ff 66.600%,#ff00ff 83.300%,#ff0000 100%);box-shadow:0 0 0 1px #3a3a3a;"></div>
<div style="left:1876px;top:184px;width:9px;height:7px;background:#ffffff;"></div>
<div style="left:1876px;top:191px;width:9px;height:8px;background:#000000;"></div>
<div style="left:1679px;top:207px;width:238px;height:17px;background:#3f3f3f;border-bottom:1px solid #333;"></div>
<div style="left:1679px;top:207px;width:38px;height:17px;background:#535353;border-right:1px solid #333;border-top:1px solid #626262;"></div>
<div class="t" style="left:1686px;top:208px;height:17px;line-height:17px;font-size:12px;color:#dfe3e8;">调整</div>
<div style="left:1717px;top:207px;width:40px;height:16px;background:#454545;border-right:1px solid #333;border-top:1px solid #505050;"></div>
<div class="t" style="left:1724px;top:208px;height:17px;line-height:17px;font-size:12px;color:#8f98a4;">样式</div>
<svg style="left:1901px;top:212px;" width="14" height="8" viewBox="0 0 14 8"><path d="M0 1 h5 l-2.500 3z" fill="#d0d0d0"/><rect x="6" y="0" width="7" height="1" fill="#d0d0d0"/><rect x="6" y="2" width="7" height="1" fill="#d0d0d0"/><rect x="6" y="4" width="7" height="1" fill="#d0d0d0"/><rect x="6" y="6" width="7" height="1" fill="#d0d0d0"/></svg>
<div style="left:1679px;top:224px;width:238px;height:112px;background:#535353;"></div>
<div style="left:1679px;top:336px;width:238px;height:3px;background:#333333;"></div>
<div class="t" style="left:1689px;top:230px;height:17px;line-height:17px;font-size:12px;color:#f0f0f0;">添加调整</div>
<svg width="0" height="0" style="left:0;top:0"><defs><linearGradient id="ag" x1="0" x2="0" y1="0" y2="1"><stop offset="0" stop-color="#e0e0e0"/><stop offset="1" stop-color="#909090"/></linearGradient><linearGradient id="agh" x1="0" x2="1"><stop offset="0" stop-color="#3c3c3c"/><stop offset="1" stop-color="#d8d8d8"/></linearGradient></defs></svg>
<svg style="left:1726px;top:253px;" width="18" height="18" viewBox="0 0 18 18"><circle cx="9" cy="9" r="3.600" fill="#5a5a5a" stroke="#c8c8c8" stroke-width="1.200"/><path d="M9 5.400 a3.600 3.600 0 0 0 0 7.200z" fill="#c8c8c8"/><path d="M9 0.500 v2.800 M9 14.700 v2.800 M0.500 9 h2.800 M14.700 9 h2.800 M3 3 l2 2 M13 13 l2 2 M3 15 l2 -2 M13 5 l2 -2" stroke="#c8c8c8" stroke-width="1.700"/></svg>
<svg style="left:1751px;top:256px;" width="18" height="13" viewBox="0 0 18 13"><path d="M0.500 12.500 v-6.500 l1 0.500 l0.800 -2.500 l1 3.500 l1.200 -5.500 l1.300 4.500 l1.200 -3 l1.200 3.500 l1.300 -6 l1.200 5.500 l1.200 -3.500 l1.200 4 l1 -2.500 l1 3 l1 -2 l0.900 1 V12.500z" fill="url(#ag)"/></svg>
<svg style="left:1776px;top:255px;" width="16" height="14" viewBox="0 0 16 14"><rect x="0.500" y="0.500" width="15" height="13" fill="#6a6a6a" stroke="#c8c8c8"/><path d="M0.500 5 h15 M0.500 9.500 h15 M5.500 0.500 v13 M10.500 0.500 v13" stroke="#a8a8a8" stroke-width="0.800"/><path d="M1 13 q6 0 7 -6 t7 -6" fill="none" stroke="#f0f0f0" stroke-width="1.300"/></svg>
<svg style="left:1800px;top:255px;" width="16" height="14" viewBox="0 0 16 14"><rect x="0.500" y="0.500" width="15" height="13" fill="#4e4e4e" stroke="#c8c8c8"/><path d="M15 1 L15 13 L1 13 Z" fill="#b4b4b4"/><path d="M2.500 4.500 h4 M4.500 2.500 v4" stroke="#f0f0f0" stroke-width="1.100"/><path d="M9.500 9.500 h4" stroke="#f0f0f0" stroke-width="1.100"/></svg>
<svg style="left:1824px;top:254px;" width="16" height="16" viewBox="0 0 16 16"><path d="M0.500 0.500 h15 l-7.500 14.500z" fill="url(#ag)" stroke="#c8c8c8" stroke-width="1"/><path d="M4.500 3 h7 l-3.500 7z" fill="#666"/></svg>
<svg style="left:1716px;top:283px;" width="16" height="13" viewBox="0 0 16 13"><rect x="0.500" y="0.500" width="15" height="12" fill="url(#agh)" stroke="#c8c8c8"/><rect x="1" y="1" width="14" height="4.500" fill="#8e8e8e"/><path d="M3.500 1 v4.500 M7 1 v4.500 M10.500 1 v4.500 M13.500 1 v4.500" stroke="#c8c8c8" stroke-width="1.500"/></svg>
<svg style="left:1738px;top:283px;" width="18" height="15" viewBox="0 0 18 15"><path d="M9 0.500 v3" stroke="#c8c8c8" stroke-width="3"/><path d="M2.500 4 h13" stroke="#c8c8c8" stroke-width="2"/><path d="M3.500 4 l-3 7.500 h6z M14.500 4 l-3 7.500 h6z" fill="none" stroke="#c8c8c8" stroke-width="1"/><path d="M0 10.500 h7 q-0.500 3.500 -3.500 3.500 t-3.500 -3.500z M11 10.500 h7 q-0.500 3.500 -3.500 3.500 t-3.500 -3.500z" fill="#c8c8c8"/></svg>
<svg style="left:1764px;top:283px;" width="16" height="13" viewBox="0 0 16 13"><rect x="0.500" y="0.500" width="15" height="12" fill="#4a4a4a" stroke="#c8c8c8"/><rect x="8" y="1" width="7.500" height="11" fill="url(#ag)"/></svg>
<svg style="left:1786px;top:281px;" width="18" height="16" viewBox="0 0 18 16"><path d="M0.500 2.500 h3 l1 -1.800 h5 l1 1.800 h3 v8 h-13z" fill="#c8c8c8"/><circle cx="6.500" cy="6" r="2" fill="none" stroke="#555" stroke-width="1.200"/><circle cx="12" cy="10.500" r="4.500" fill="#9a9a9a" fill-opacity="0.850" stroke="#d8d8d8" stroke-width="1.100"/></svg>
<svg style="left:1812px;top:283px;" width="16" height="15" viewBox="0 0 16 15"><circle cx="8" cy="4.800" r="4.500" fill="#b4b4b4"/><circle cx="4.800" cy="10" r="4.500" fill="#c8c8c8"/><circle cx="11.200" cy="10" r="4.500" fill="#bcbcbc"/><path d="M5 5.500 h6 l-2.300 3.200 v3.800 h-1.400 v-3.800z" fill="#4e4e4e"/></svg>
<svg style="left:1836px;top:283px;" width="16" height="13" viewBox="0 0 16 13"><rect x="0.500" y="0.500" width="15" height="12" fill="#c4c4c4" stroke="#c8c8c8"/><rect x="1" y="1" width="4" height="3" fill="#a8a8a8"/><rect x="6" y="1" width="4" height="3" fill="#848484"/><rect x="11" y="1" width="4" height="3" fill="#5a5a5a"/><rect x="1" y="5" width="4" height="3" fill="#848484"/><rect x="6" y="5" width="4" height="3" fill="#7a7a7a"/><rect x="11" y="5" width="4" height="3" fill="#555555"/><rect x="1" y="9" width="4" height="3" fill="#5a5a5a"/><rect x="6" y="9" width="4" height="3" fill="#555555"/><rect x="11" y="9" width="4" height="3" fill="#4a4a4a"/></svg>
<svg style="left:1727px;top:310px;" width="16" height="13" viewBox="0 0 16 13"><rect x="0.500" y="0.500" width="15" height="12" fill="url(#ag)" stroke="#c8c8c8"/><ellipse cx="8" cy="6.500" rx="4.800" ry="3" fill="#555" transform="rotate(-28 8 6.500)"/><path d="M1.500 11.500 L14.500 1.500" stroke="#555" stroke-width="1.200"/></svg>
<svg style="left:1752px;top:310px;" width="16" height="13" viewBox="0 0 16 13"><rect x="0.500" y="0.500" width="15" height="12" fill="#6e6e6e" stroke="#c8c8c8"/><path d="M1 8.500 q5 -2 8 -7.500 h4 q-4 7 -12 10.500z M6 12.500 q6 -2.500 9.500 -8.500 v4 q-2 3 -5 4.500z" fill="#c0c0c0"/></svg>
<svg style="left:1776px;top:310px;" width="16" height="13" viewBox="0 0 16 13"><rect x="0.500" y="0.500" width="15" height="12" fill="#b8b8b8" stroke="#c8c8c8"/><path d="M2 10 h3 v-2.500 h3 v-2.500 h3 v-2.500 h3" fill="none" stroke="#4a4a4a" stroke-width="2.600"/><path d="M7 11 h6" stroke="#4a4a4a" stroke-width="1.500"/></svg>
<svg style="left:1800px;top:310px;" width="16" height="13" viewBox="0 0 16 13"><rect x="0.500" y="0.500" width="15" height="12" fill="#b8b8b8" stroke="#c8c8c8"/><path d="M1 1 L8 6.500 L1 12z M15 1 L8 6.500 L15 12z" fill="#707070"/></svg>
<svg style="left:1824px;top:310px;" width="16" height="13" viewBox="0 0 16 13"><rect x="0.500" y="0.500" width="15" height="12" fill="url(#agh)" stroke="#c8c8c8"/></svg>
<div style="left:1679px;top:339px;width:238px;height:17px;background:#3f3f3f;border-bottom:1px solid #333;"></div>
<div style="left:1679px;top:339px;width:38px;height:17px;background:#535353;border-right:1px solid #333;border-top:1px solid #626262;"></div>
<div class="t" style="left:1686px;top:340px;height:17px;line-height:17px;font-size:12px;color:#dfe3e8;">图层</div>
<div style="left:1717px;top:339px;width:40px;height:16px;background:#454545;border-right:1px solid #333;border-top:1px solid #505050;"></div>
<div class="t" style="left:1724px;top:340px;height:17px;line-height:17px;font-size:12px;color:#8f98a4;">通道</div>
<div style="left:1757px;top:339px;width:40px;height:16px;background:#454545;border-right:1px solid #333;border-top:1px solid #505050;"></div>
<div class="t" style="left:1764px;top:340px;height:17px;line-height:17px;font-size:12px;color:#8f98a4;">路径</div>
<svg style="left:1901px;top:344px;" width="14" height="8" viewBox="0 0 14 8"><path d="M0 1 h5 l-2.500 3z" fill="#d0d0d0"/><rect x="6" y="0" width="7" height="1" fill="#d0d0d0"/><rect x="6" y="2" width="7" height="1" fill="#d0d0d0"/><rect x="6" y="4" width="7" height="1" fill="#d0d0d0"/><rect x="6" y="6" width="7" height="1" fill="#d0d0d0"/></svg>
<div style="left:1679px;top:356px;width:238px;height:85px;background:#535353;"></div>
<div style="left:1679px;top:383px;width:238px;height:1px;background:#3a3a3a;"></div>
<div style="left:1679px;top:384px;width:238px;height:1px;background:#5e5e5e;"></div>
<div style="left:1679px;top:411px;width:238px;height:1px;background:#3a3a3a;"></div>
<div style="left:1679px;top:412px;width:238px;height:1px;background:#5e5e5e;"></div>
<div style="left:1684px;top:360px;width:70px;height:20px;background:linear-gradient(#646464,#515151);border:1px solid #303030;border-radius:3px;box-shadow:0 1px 0 #626262;"></div>
<svg style="left:1689px;top:365px;" width="9" height="10" viewBox="0 0 9 10"><circle cx="5.500" cy="3.500" r="2.800" fill="none" stroke="#e0e0e0" stroke-width="1.300"/><path d="M3.500 5.500 L0.500 9" stroke="#e0e0e0" stroke-width="1.600"/></svg>
<div class="t" style="left:1705px;top:361px;height:17px;line-height:17px;font-size:12px;color:#f0f0f0;">类型</div>
<svg style="left:1743px;top:364px;" width="7" height="11" viewBox="0 0 7 11"><path d="M0.500 4 h6 l-3 -3.500z M0.500 7 h6 l-3 3.500z" fill="#f0f0f0"/></svg>
<svg style="left:1775px;top:363px;" width="14" height="12" viewBox="0 0 14 12"><rect x="0.500" y="0.500" width="13" height="11" fill="#4a4a4a" stroke="#c4c4c4"/><path d="M2 10 l3 -4 l2 2 l2 -3 l3 5z" fill="#c4c4c4"/><circle cx="10" cy="3.500" r="1.200" fill="#c4c4c4"/></svg>
<svg style="left:1799px;top:363px;" width="12" height="12" viewBox="0 0 12 12"><circle cx="6" cy="6" r="5" fill="none" stroke="#c4c4c4" stroke-width="1.200"/><path d="M9.500 2.500 A5 5 0 0 0 2.500 9.500 Z" fill="#c4c4c4"/></svg>
<div class="t" style="left:1823px;top:359px;height:20px;line-height:20px;font-size:16px;color:#c4c4c4;font-family:'Liberation Serif',serif;">T</div>
<svg style="left:1847px;top:363px;" width="13" height="12" viewBox="0 0 13 12"><rect x="2" y="2" width="9" height="8" fill="none" stroke="#c4c4c4" stroke-width="1.200"/><rect x="0" y="0" width="3" height="3" fill="#c4c4c4"/><rect x="10" y="0" width="3" height="3" fill="#c4c4c4"/><rect x="0" y="9" width="3" height="3" fill="#c4c4c4"/><rect x="10" y="9" width="3" height="3" fill="#c4c4c4"/></svg>
<svg style="left:1872px;top:362px;" width="12" height="14" viewBox="0 0 12 14"><path d="M4.500 0.500 h4 l3 3 v8 h-7z" fill="#4a4a4a" stroke="#c4c4c4"/><path d="M8 0.500 v3.500 h3.500" fill="none" stroke="#c4c4c4"/><rect x="0.500" y="7" width="6" height="6" fill="#999" stroke="#c4c4c4"/></svg>
<div style="left:1906px;top:361px;width:9px;height:17px;background:#3e3e3e;border:1px solid #2e2e2e;border-radius:2px;"></div>
<div style="left:1907px;top:362px;width:7px;height:7px;background:linear-gradient(#a0a0a0,#6a6a6a);border-radius:1px;"></div>
<div style="left:1684px;top:388px;width:110px;height:20px;background:linear-gradient(#646464,#515151);border:1px solid #303030;border-radius:3px;box-shadow:0 1px 0 #626262;"></div>
<div class="t" style="left:1692px;top:389px;height:18px;line-height:18px;font-size:12px;color:#f0f0f0;">正常</div>
<svg style="left:1782px;top:392px;" width="7" height="11" viewBox="0 0 7 11"><path d="M0.5 4 h6 l-3 -3.5z M0.5 7 h6 l-3 3.5z" fill="#f0f0f0"/></svg>
<div class="t" style="left:1802px;top:389px;height:17px;line-height:17px;font-size:12px;color:#f0f0f0;letter-spacing:-0.300px;">不透明度:</div>
<div style="left:1859px;top:388px;width:36px;height:20px;background:#333333;border:1px solid #2a2a2a;"></div>
<div class="t" style="left:1862px;top:390px;height:16px;line-height:16px;font-size:12px;color:#f0f0f0;letter-spacing:-0.300px;">100%</div>
<div style="left:1895px;top:388px;width:20px;height:20px;background:linear-gradient(#646464,#515151);border:1px solid #2e2e2e;border-left:none;border-radius:0 3px 3px 0;"></div>
<svg style="left:1902px;top:396px;" width="7" height="4" viewBox="0 0 7 4"><path d="M0 0 h7 l-3.500 4z" fill="#f0f0f0"/></svg>
<div class="t" style="left:1686px;top:417px;height:17px;line-height:17px;font-size:12px;color:#f0f0f0;">锁定:</div>
<svg style="left:1723px;top:421px;" width="12" height="12" viewBox="0 0 12 12"><rect x="0.500" y="0.500" width="11" height="11" fill="#777" stroke="#c4c4c4"/><rect x="1" y="1" width="3.500" height="3.500" fill="#c4c4c4"/><rect x="8" y="1" width="3.500" height="3.500" fill="#c4c4c4"/><rect x="4.500" y="4.500" width="3.500" height="3.500" fill="#c4c4c4"/><rect x="1" y="8" width="3.500" height="3.500" fill="#c4c4c4"/><rect x="8" y="8" width="3.500" height="3.500" fill="#c4c4c4"/></svg>
<svg style="left:1743px;top:418px;" width="17" height="15" viewBox="0 0 17 15"><path d="M16 1 L8 9" stroke="#c4c4c4" stroke-width="1.800"/><path d="M8 8.500 q-2.500 0 -3.500 2 q-1 2.500 -4 3 q5 1.500 7.500 -0.800 q2 -2 0 -4.200z" fill="#c4c4c4"/></svg>
<svg style="left:1765px;top:419px;" width="14" height="14" viewBox="0 0 14 14"><path d="M7 1 v12 M1 7 h12" stroke="#c4c4c4" stroke-width="1.200"/><path d="M7 0 l-2.500 3 h5z M7 14 l-2.500 -3 h5z M0 7 l3 -2.500 v5z M14 7 l-3 -2.500 v5z" fill="#c4c4c4"/></svg>
<svg style="left:1790px;top:419px;" width="11" height="14" viewBox="0 0 11 14"><path d="M2.500 6 v-2 a3 3 0 0 1 6 0 v2" fill="none" stroke="#c4c4c4" stroke-width="1.600"/><rect x="0.500" y="6" width="10" height="7.500" rx="1" fill="#c4c4c4"/><rect x="5" y="8.500" width="1.500" height="2.500" fill="#444"/></svg>
<div class="t" style="left:1826px;top:417px;height:17px;line-height:17px;font-size:12px;color:#f0f0f0;">填充:</div>
<div style="left:1859px;top:416px;width:36px;height:20px;background:#333333;border:1px solid #2a2a2a;"></div>
<div class="t" style="left:1862px;top:418px;height:16px;line-height:16px;font-size:12px;color:#f0f0f0;letter-spacing:-0.300px;">100%</div>
<div style="left:1895px;top:416px;width:20px;height:20px;background:linear-gradient(#646464,#515151);border:1px solid #2e2e2e;border-left:none;border-radius:0 3px 3px 0;"></div>
<svg style="left:1902px;top:424px;" width="7" height="4" viewBox="0 0 7 4"><path d="M0 0 h7 l-3.500 4z" fill="#f0f0f0"/></svg>
<div style="left:1679px;top:441px;width:238px;height:459px;background:#474747;"></div>
<div style="left:1904px;top:441px;width:13px;height:459px;background:#3f3f3f;"></div>
<div style="left:1679px;top:442px;width:225px;height:38px;background:#586578;"></div>
<div style="left:1679px;top:442px;width:30px;height:38px;background:#535353;"></div>
<div style="left:1709px;top:442px;width:1px;height:38px;background:#3e3e3e;"></div>
<div style="left:1679px;top:480px;width:225px;height:1px;background:#3a3a3a;"></div>
<svg style="left:1688px;top:456px;" width="13" height="10" viewBox="0 0 13 10"><path d="M0 4.700 Q6.200 -2.300 12.400 4.700 Q6.200 11.300 0 4.700z" fill="#b4b4b4"/><circle cx="6.200" cy="4.700" r="2.900" fill="#3e3e3e"/><circle cx="7.100" cy="3.700" r="0.900" fill="#c0c0c0"/></svg>
<div style="left:1713px;top:445px;width:20px;height:32px;background-color:#fff;background-image:linear-gradient(45deg,#ccc 25%,transparent 25%,transparent 75%,#ccc 75%),linear-gradient(45deg,#ccc 25%,transparent 25%,transparent 75%,#ccc 75%);background-size:8px 8px;background-position:-1px -1px,3px 3px;border:1px solid #101010;"></div>
<div style="left:1723px;top:470px;width:8px;height:4px;background:#7e7d86;"></div>
<div class="t" style="left:1743px;top:455px;height:17px;line-height:17px;font-size:12px;color:#f0f0f0;">立体图</div>
<svg style="left:1711px;top:443px;" width="24" height="36" viewBox="0 0 24 36"><path d="M0.500 11 v-10.500 h7.500 M16 0.500 h7.500 v10.500 M23.500 25 v10.500 h-7.500 M8 35.500 h-7.500 v-10.500" fill="none" stroke="#ffffff" stroke-width="1.200"/></svg>
<div style="left:1679px;top:481px;width:225px;height:38px;background:#535353;"></div>
<div style="left:1679px;top:481px;width:30px;height:38px;background:#535353;"></div>
<div style="left:1709px;top:481px;width:1px;height:38px;background:#3e3e3e;"></div>
<div style="left:1679px;top:519px;width:225px;height:1px;background:#3a3a3a;"></div>
<svg style="left:1688px;top:495px;" width="13" height="10" viewBox="0 0 13 10"><path d="M0 4.700 Q6.200 -2.300 12.400 4.700 Q6.200 11.300 0 4.700z" fill="#b4b4b4"/><circle cx="6.200" cy="4.700" r="2.900" fill="#3e3e3e"/><circle cx="7.100" cy="3.700" r="0.900" fill="#c0c0c0"/></svg>
<div style="left:1713px;top:484px;width:20px;height:32px;background-color:#fff;background-image:linear-gradient(45deg,#ccc 25%,transparent 25%,transparent 75%,#ccc 75%),linear-gradient(45deg,#ccc 25%,transparent 25%,transparent 75%,#ccc 75%);background-size:8px 8px;background-position:-1px -1px,3px 3px;border:1px solid #101010;"></div>
<div style="left:1723px;top:499px;width:8px;height:7px;background:#7e7d86;"></div>
<div class="t" style="left:1743px;top:494px;height:17px;line-height:17px;font-size:12px;color:#f0f0f0;">仰视图</div>
<div style="left:1679px;top:520px;width:225px;height:38px;background:#535353;"></div>
<div style="left:1679px;top:520px;width:30px;height:38px;background:#535353;"></div>
<div style="left:1709px;top:520px;width:1px;height:38px;background:#3e3e3e;"></div>
<div style="left:1679px;top:558px;width:225px;height:1px;background:#3a3a3a;"></div>
<svg style="left:1688px;top:534px;" width="13" height="10" viewBox="0 0 13 10"><path d="M0 4.700 Q6.200 -2.300 12.400 4.700 Q6.200 11.300 0 4.700z" fill="#b4b4b4"/><circle cx="6.200" cy="4.700" r="2.900" fill="#3e3e3e"/><circle cx="7.100" cy="3.700" r="0.900" fill="#c0c0c0"/></svg>
<div style="left:1713px;top:523px;width:20px;height:32px;background-color:#fff;background-image:linear-gradient(45deg,#ccc 25%,transparent 25%,transparent 75%,#ccc 75%),linear-gradient(45deg,#ccc 25%,transparent 25%,transparent 75%,#ccc 75%);background-size:8px 8px;background-position:-1px -1px,3px 3px;border:1px solid #101010;"></div>
<div style="left:1716px;top:538px;width:7px;height:7px;background:#7e7d86;"></div>
<div class="t" style="left:1743px;top:533px;height:17px;line-height:17px;font-size:12px;color:#f0f0f0;">俯视图</div>
<div style="left:1679px;top:559px;width:225px;height:38px;background:#535353;"></div>
<div style="left:1679px;top:559px;width:30px;height:38px;background:#535353;"></div>
<div style="left:1709px;top:559px;width:1px;height:38px;background:#3e3e3e;"></div>
<div style="left:1679px;top:597px;width:225px;height:1px;background:#3a3a3a;"></div>
<svg style="left:1688px;top:573px;" width="13" height="10" viewBox="0 0 13 10"><path d="M0 4.700 Q6.200 -2.300 12.400 4.700 Q6.200 11.300 0 4.700z" fill="#b4b4b4"/><circle cx="6.200" cy="4.700" r="2.900" fill="#3e3e3e"/><circle cx="7.100" cy="3.700" r="0.900" fill="#c0c0c0"/></svg>
<div style="left:1713px;top:562px;width:20px;height:32px;background-color:#fff;background-image:linear-gradient(45deg,#ccc 25%,transparent 25%,transparent 75%,#ccc 75%),linear-gradient(45deg,#ccc 25%,transparent 25%,transparent 75%,#ccc 75%);background-size:8px 8px;background-position:-1px -1px,3px 3px;border:1px solid #101010;"></div>
<div style="left:1723px;top:572px;width:8px;height:3px;background:#7e7d86;"></div>
<div class="t" style="left:1743px;top:572px;height:17px;line-height:17px;font-size:12px;color:#f0f0f0;">右视图</div>
<div style="left:1679px;top:598px;width:225px;height:38px;background:#535353;"></div>
<div style="left:1679px;top:598px;width:30px;height:38px;background:#535353;"></div>
<div style="left:1709px;top:598px;width:1px;height:38px;background:#3e3e3e;"></div>
<div style="left:1679px;top:636px;width:225px;height:1px;background:#3a3a3a;"></div>
<svg style="left:1688px;top:612px;" width="13" height="10" viewBox="0 0 13 10"><path d="M0 4.700 Q6.200 -2.300 12.400 4.700 Q6.200 11.300 0 4.700z" fill="#b4b4b4"/><circle cx="6.200" cy="4.700" r="2.900" fill="#3e3e3e"/><circle cx="7.100" cy="3.700" r="0.900" fill="#c0c0c0"/></svg>
<div style="left:1713px;top:601px;width:20px;height:32px;background-color:#fff;background-image:linear-gradient(45deg,#ccc 25%,transparent 25%,transparent 75%,#ccc 75%),linear-gradient(45deg,#ccc 25%,transparent 25%,transparent 75%,#ccc 75%);background-size:8px 8px;background-position:-1px -1px,3px 3px;border:1px solid #101010;"></div>
<div style="left:1716px;top:611px;width:7px;height:3px;background:#7e7d86;"></div>
<div class="t" style="left:1743px;top:611px;height:17px;line-height:17px;font-size:12px;color:#f0f0f0;">左视图</div>
<div style="left:1679px;top:637px;width:225px;height:38px;background:#535353;"></div>
<div style="left:1679px;top:637px;width:30px;height:38px;background:#535353;"></div>
<div style="left:1709px;top:637px;width:1px;height:38px;background:#3e3e3e;"></div>
<div style="left:1679px;top:675px;width:225px;height:1px;background:#3a3a3a;"></div>
<svg style="left:1688px;top:651px;" width="13" height="10" viewBox="0 0 13 10"><path d="M0 4.700 Q6.200 -2.300 12.400 4.700 Q6.200 11.300 0 4.700z" fill="#b4b4b4"/><circle cx="6.200" cy="4.700" r="2.900" fill="#3e3e3e"/><circle cx="7.100" cy="3.700" r="0.900" fill="#c0c0c0"/></svg>
<div style="left:1713px;top:640px;width:20px;height:32px;background-color:#fff;background-image:linear-gradient(45deg,#ccc 25%,transparent 25%,transparent 75%,#ccc 75%),linear-gradient(45deg,#ccc 25%,transparent 25%,transparent 75%,#ccc 75%);background-size:8px 8px;background-position:-1px -1px,3px 3px;border:1px solid #101010;"></div>
<div style="left:1722px;top:645px;width:9px;height:3px;background:#7e7d86;"></div>
<div class="t" style="left:1743px;top:650px;height:17px;line-height:17px;font-size:12px;color:#f0f0f0;">后视图</div>
<div style="left:1679px;top:676px;width:225px;height:38px;background:#535353;"></div>
<div style="left:1679px;top:676px;width:30px;height:38px;background:#535353;"></div>
<div style="left:1709px;top:676px;width:1px;height:38px;background:#3e3e3e;"></div>
<div style="left:1679px;top:714px;width:225px;height:1px;background:#3a3a3a;"></div>
<svg style="left:1688px;top:690px;" width="13" height="10" viewBox="0 0 13 10"><path d="M0 4.700 Q6.200 -2.300 12.400 4.700 Q6.200 11.300 0 4.700z" fill="#b4b4b4"/><circle cx="6.200" cy="4.700" r="2.900" fill="#3e3e3e"/><circle cx="7.100" cy="3.700" r="0.900" fill="#c0c0c0"/></svg>
<div style="left:1713px;top:679px;width:20px;height:32px;background-color:#fff;background-image:linear-gradient(45deg,#ccc 25%,transparent 25%,transparent 75%,#ccc 75%),linear-gradient(45deg,#ccc 25%,transparent 25%,transparent 75%,#ccc 75%);background-size:8px 8px;background-position:-1px -1px,3px 3px;border:1px solid #101010;"></div>
<div style="left:1716px;top:684px;width:7px;height:3px;background:#7e7d86;"></div>
<div class="t" style="left:1743px;top:689px;height:17px;line-height:17px;font-size:12px;color:#f0f0f0;">主视图</div>
<div style="left:1679px;top:715px;width:225px;height:38px;background:#535353;"></div>
<div style="left:1679px;top:715px;width:30px;height:38px;background:#535353;"></div>
<div style="left:1709px;top:715px;width:1px;height:38px;background:#3e3e3e;"></div>
<div style="left:1679px;top:753px;width:225px;height:1px;background:#3a3a3a;"></div>
<svg style="left:1688px;top:729px;" width="13" height="10" viewBox="0 0 13 10"><path d="M0 4.700 Q6.200 -2.300 12.400 4.700 Q6.200 11.300 0 4.700z" fill="#b4b4b4"/><circle cx="6.200" cy="4.700" r="2.900" fill="#3e3e3e"/><circle cx="7.100" cy="3.700" r="0.900" fill="#c0c0c0"/></svg>
<div style="left:1713px;top:718px;width:20px;height:32px;background:#ffffff;border:1px solid #101010;"></div>
<div class="t" style="left:1745px;top:727px;height:17px;line-height:17px;font-size:11px;color:#f4f4f4;font-style:italic;">背景</div>
<svg style="left:1876px;top:727px;" width="11" height="13" viewBox="0 0 11 13"><path d="M2.500 5.500 v-2 a3 3 0 0 1 6 0 v2" fill="none" stroke="#c4c4c4" stroke-width="1.300"/><rect x="1" y="5.500" width="9" height="7" rx="0.500" fill="none" stroke="#c4c4c4" stroke-width="1.300"/><rect x="5" y="8" width="1.300" height="2.500" fill="#c4c4c4"/></svg>
<div class="t" style="left:1833px;top:874px;height:24px;line-height:24px;font-size:21px;color:#9a9a9a;font-weight:bold;-webkit-text-stroke:1.1px #9a9a9a;transform:scaleX(0.640);transform-origin:left;">mysipo.com</div>
</body></html>
